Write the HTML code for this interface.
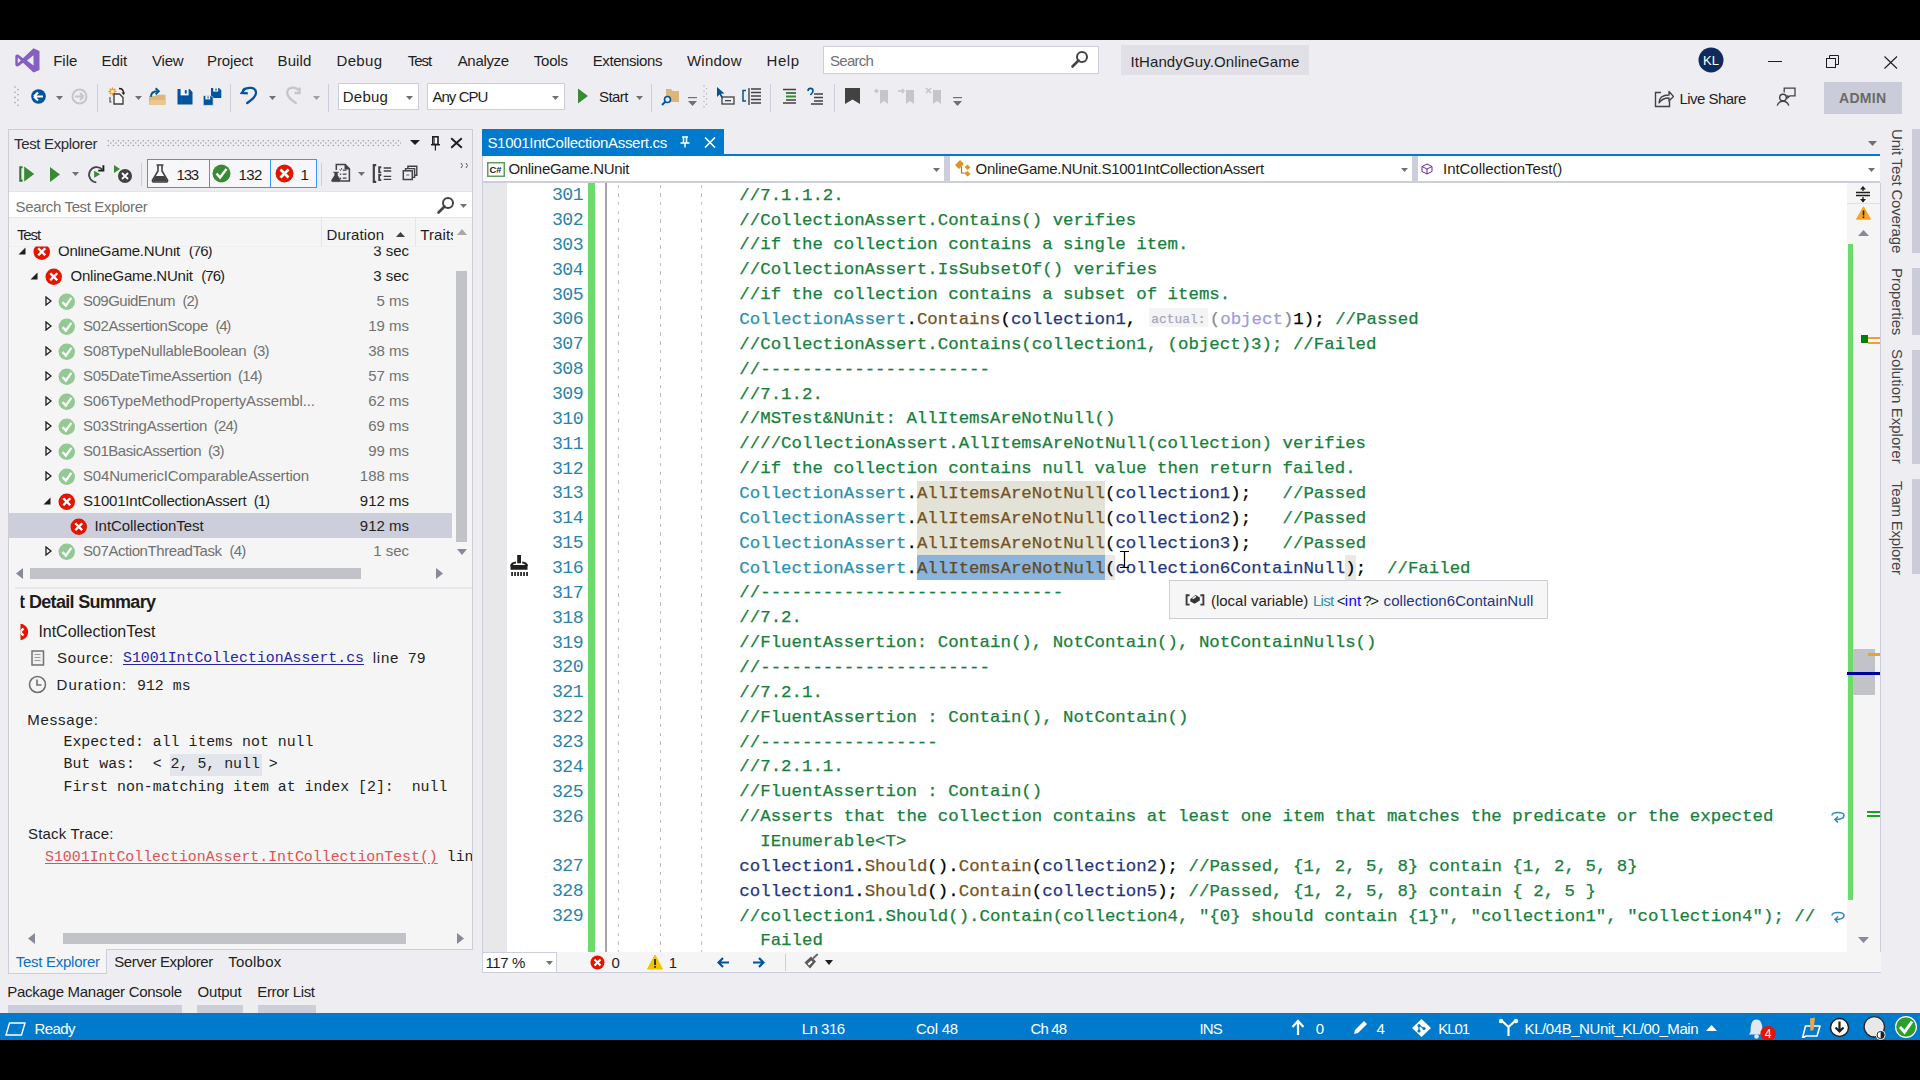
<!DOCTYPE html><html><head><meta charset="utf-8"><title>VS</title><style>
html,body{margin:0;padding:0;width:1920px;height:1080px;overflow:hidden;background:#000;}
.r{position:absolute;display:block;}
.t{position:absolute;line-height:1;white-space:nowrap;}
.cd{-webkit-text-stroke:0.25px currentColor;}
.cd span{-webkit-text-stroke:0.25px currentColor;}
</style></head><body><div class="r" style="left:0px;top:40px;width:1920px;height:973px;background:#EEEEF2;"></div>
<div class="r" style="left:0px;top:1013px;width:1920px;height:27px;background:#007ACC;"></div>
<svg class="r" style="left:15px;top:47.5px" width="25" height="25" viewBox="0 0 25 25"><path d="M18.5 0.3 L24.5 2.9 V22 L18.5 24.4 L8 14.7 L3.8 18 C2 19 0.3 18.3 0.3 16.3 V8.7 C0.3 6.7 2 6 3.8 7 L8 10.2 Z M18.5 7.2 L12 12.45 L18.5 17.6 Z M2.8 9.6 V15.3 L5.8 12.45 Z" fill="#865FC5" fill-rule="evenodd"/></svg>
<div class="t" style="left:53.20px;top:53.30px;font-family:'Liberation Sans', sans-serif;font-size:15px;color:#1E1E1E;letter-spacing:-0.009px;">File</div>
<div class="t" style="left:101.50px;top:53.30px;font-family:'Liberation Sans', sans-serif;font-size:15px;color:#1E1E1E;letter-spacing:-0.06px;">Edit</div>
<div class="t" style="left:152.00px;top:53.30px;font-family:'Liberation Sans', sans-serif;font-size:15px;color:#1E1E1E;letter-spacing:-0.22px;">View</div>
<div class="t" style="left:207.00px;top:53.30px;font-family:'Liberation Sans', sans-serif;font-size:15px;color:#1E1E1E;letter-spacing:-0.086px;">Project</div>
<div class="t" style="left:277.50px;top:53.30px;font-family:'Liberation Sans', sans-serif;font-size:15px;color:#1E1E1E;letter-spacing:0.122px;">Build</div>
<div class="t" style="left:336.50px;top:53.30px;font-family:'Liberation Sans', sans-serif;font-size:15px;color:#1E1E1E;letter-spacing:0.335px;">Debug</div>
<div class="t" style="left:407.70px;top:53.30px;font-family:'Liberation Sans', sans-serif;font-size:15px;color:#1E1E1E;letter-spacing:-1.014px;">Test</div>
<div class="t" style="left:457.70px;top:53.30px;font-family:'Liberation Sans', sans-serif;font-size:15px;color:#1E1E1E;letter-spacing:-0.329px;">Analyze</div>
<div class="t" style="left:533.75px;top:53.30px;font-family:'Liberation Sans', sans-serif;font-size:15px;color:#1E1E1E;letter-spacing:-0.192px;">Tools</div>
<div class="t" style="left:592.75px;top:53.30px;font-family:'Liberation Sans', sans-serif;font-size:15px;color:#1E1E1E;letter-spacing:-0.414px;">Extensions</div>
<div class="t" style="left:686.90px;top:53.30px;font-family:'Liberation Sans', sans-serif;font-size:15px;color:#1E1E1E;letter-spacing:0.257px;">Window</div>
<div class="t" style="left:766.50px;top:53.30px;font-family:'Liberation Sans', sans-serif;font-size:15px;color:#1E1E1E;letter-spacing:0.581px;">Help</div>
<div class="r" style="left:823px;top:46px;width:276px;height:28px;background:#FFFFFF;box-sizing:border-box;border:1px solid #CCCEDB;"></div>
<div class="t" style="left:830.00px;top:53.30px;font-family:'Liberation Sans', sans-serif;font-size:15px;color:#717171;letter-spacing:-0.717px;">Search</div>
<svg class="r" style="left:1070px;top:50px" width="20" height="20" viewBox="0 0 20 20"><circle cx="12" cy="7" r="5" fill="none" stroke="#424242" stroke-width="2"/><line x1="8.5" y1="10.5" x2="2.5" y2="16.5" stroke="#424242" stroke-width="2.6" stroke-linecap="round"/></svg>
<div class="r" style="left:1121px;top:45px;width:188px;height:30px;background:#E0E0E6;"></div>
<div class="t" style="left:1130.40px;top:54.30px;font-family:'Liberation Sans', sans-serif;font-size:15px;color:#1E1E1E;letter-spacing:0.119px;">ItHandyGuy.OnlineGame</div>
<svg class="r" style="left:1698px;top:47px" width="26" height="26" viewBox="0 0 26 26"><circle cx="13" cy="13" r="12.5" fill="#0E2B5E"/><text x="13" y="17.5" font-family="Liberation Sans" font-size="13" fill="#FFFFFF" text-anchor="middle">KL</text></svg>
<div class="r" style="left:1768px;top:61px;width:14px;height:1px;background:#1E1E1E;"></div>
<svg class="r" style="left:1826px;top:55px" width="14" height="14" viewBox="0 0 14 14"><rect x="0.5" y="3.5" width="9" height="9" fill="none" stroke="#1E1E1E"/><path d="M3.5 3.5 V0.5 H12.5 V9.5 H9.5" fill="none" stroke="#1E1E1E"/></svg>
<svg class="r" style="left:1884px;top:56px" width="14" height="13" viewBox="0 0 14 13"><path d="M0.5 0.5 L13 12.5 M13 0.5 L0.5 12.5" stroke="#1E1E1E" stroke-width="1.1"/></svg>
<svg class="r" style="left:14px;top:86px" width="6" height="22" viewBox="0 0 6 22"><circle cx="1" cy="1.0" r="0.8" fill="#A0A0A0"/><circle cx="4" cy="3.6" r="0.8" fill="#A0A0A0"/><circle cx="1" cy="6.2" r="0.8" fill="#A0A0A0"/><circle cx="4" cy="8.8" r="0.8" fill="#A0A0A0"/><circle cx="1" cy="11.4" r="0.8" fill="#A0A0A0"/><circle cx="4" cy="14.0" r="0.8" fill="#A0A0A0"/><circle cx="1" cy="16.6" r="0.8" fill="#A0A0A0"/><circle cx="4" cy="19.2" r="0.8" fill="#A0A0A0"/></svg>
<svg class="r" style="left:30px;top:88px" width="17" height="17" viewBox="0 0 17 17"><circle cx="8.5" cy="8.5" r="7.3" fill="#00539C"/><path d="M4 8.5 L8 4.5 M4 8.5 L8 12.5 M4.3 8.5 H13" stroke="#FFFFFF" stroke-width="2.2" fill="none"/></svg>
<svg class="r" style="left:56px;top:96px" width="7" height="4" viewBox="0 0 7 4"><polygon points="0,0 7,0 3.5,4" fill="#717171"/></svg>
<svg class="r" style="left:71px;top:88px" width="17" height="17" viewBox="0 0 17 17"><circle cx="8.5" cy="8.5" r="7" fill="none" stroke="#C6C6C6" stroke-width="2"/><path d="M12.5 8.5 L9 5 M12.5 8.5 L9 12 M4 8.5 H12" stroke="#C6C6C6" stroke-width="2" fill="none"/></svg>
<div class="r" style="left:97px;top:84px;width:1px;height:28px;background:#CCCEDB;"></div>
<svg class="r" style="left:107px;top:86px" width="19" height="20" viewBox="0 0 19 20"><path d="M5.5 1.5 V9.5 M1.5 5.5 H9.5 M2.7 2.7 L8.3 8.3 M8.3 2.7 L2.7 8.3" stroke="#E8932B" stroke-width="1.3"/><circle cx="5.5" cy="5.5" r="1.6" fill="#FFF3D6"/><path d="M7 8 H12.5 L16 11.5 V18 H7 Z" fill="#F6F6F6" stroke="#424242" stroke-width="1.4"/><path d="M12 2.5 C14.5 2.5 16.5 4 16.5 7" stroke="#1E1E1E" stroke-width="1.3" fill="none"/><polygon points="14.5,6.5 18.3,6.5 16.5,9" fill="#1E1E1E"/><path d="M3 11 V16 H4.5" stroke="#424242" stroke-width="1.1" fill="none"/></svg>
<svg class="r" style="left:135px;top:96px" width="7" height="4" viewBox="0 0 7 4"><polygon points="0,0 7,0 3.5,4" fill="#717171"/></svg>
<svg class="r" style="left:148px;top:87px" width="19" height="19" viewBox="0 0 19 19"><path d="M1 9 H7 L8.5 7.8 H17.5 V17.8 H1 Z" fill="#DCB67A"/><path d="M2.2 13 H17.5 V17.8 H1 Z" fill="#E9C88D"/><path d="M3 9.8 C3 6 5.5 4.3 9.5 4.3" stroke="#00539C" stroke-width="1.9" fill="none"/><path d="M7.6 1.2 L10.8 4.3 L7.6 7.4" stroke="#00539C" stroke-width="1.9" fill="none"/></svg>
<svg class="r" style="left:177px;top:89px" width="16" height="16" viewBox="0 0 16 16"><path d="M0.5 0 H12.5 L15.5 3 V15.5 H0.5 Z" fill="#00539C"/><rect x="3.6" y="0" width="8" height="6.4" fill="#F4F4F6"/><rect x="7.8" y="1.1" width="1.9" height="3.4" fill="#00539C"/><path d="M4.3 9 V15" stroke="#0A67B5" stroke-width="0.6"/></svg>
<svg class="r" style="left:202px;top:87px" width="20" height="20" viewBox="0 0 20 20"><path d="M9 1 H17 L19.3 3.3 V11 H9 Z" fill="#00539C"/><rect x="11.2" y="1" width="5" height="3.6" fill="#F4F4F6"/><rect x="13.4" y="1.5" width="1.2" height="2.2" fill="#00539C"/><path d="M1.2 8.5 H9 L11.2 10.7 V18.4 H1.2 Z" fill="#00539C" stroke="#EEEEF2" stroke-width="0.8"/><rect x="3.4" y="9" width="4.8" height="3.4" fill="#F4F4F6"/><rect x="5.5" y="9.4" width="1.1" height="2" fill="#00539C"/></svg>
<div class="r" style="left:230px;top:84px;width:1px;height:28px;background:#CCCEDB;"></div>
<svg class="r" style="left:240px;top:86px" width="18" height="19" viewBox="0 0 18 19"><path d="M3.5 3.8 C8 0.6 16 1 16 7 C16 11 11.5 14 7.2 17" stroke="#00539C" stroke-width="2.3" fill="none" stroke-linecap="round"/><path d="M5.2 2.2 L1.8 7 L7.8 7.4" stroke="#00539C" stroke-width="2.3" fill="none" stroke-linejoin="miter"/></svg>
<svg class="r" style="left:269px;top:96px" width="7" height="4" viewBox="0 0 7 4"><polygon points="0,0 7,0 3.5,4" fill="#717171"/></svg>
<svg class="r" style="left:285px;top:86px" width="18" height="19" viewBox="0 0 18 19"><path d="M13.2 3.5 C9 0.6 2.2 1 2.2 7 C2.2 11 6.5 14 10.8 17" stroke="#C6C6C6" stroke-width="2.3" fill="none" stroke-linecap="round"/><path d="M14.6 1.5 V7 H9.5" stroke="#C6C6C6" stroke-width="2.3" fill="none"/></svg>
<svg class="r" style="left:313px;top:96px" width="7" height="4" viewBox="0 0 7 4"><polygon points="0,0 7,0 3.5,4" fill="#A0A0A0"/></svg>
<div class="r" style="left:328px;top:84px;width:1px;height:28px;background:#CCCEDB;"></div>
<div class="r" style="left:338px;top:83px;width:81px;height:27px;background:#FFFFFF;box-sizing:border-box;border:1px solid #CCCEDB;"></div>
<div class="t" style="left:342.80px;top:89.30px;font-family:'Liberation Sans', sans-serif;font-size:15px;color:#1E1E1E;letter-spacing:0.21px;">Debug</div>
<svg class="r" style="left:406px;top:96px" width="7" height="4" viewBox="0 0 7 4"><polygon points="0,0 7,0 3.5,4" fill="#717171"/></svg>
<div class="r" style="left:427px;top:83px;width:138px;height:27px;background:#FFFFFF;box-sizing:border-box;border:1px solid #CCCEDB;"></div>
<div class="t" style="left:432.40px;top:89.30px;font-family:'Liberation Sans', sans-serif;font-size:15px;color:#1E1E1E;letter-spacing:-0.942px;">Any CPU</div>
<svg class="r" style="left:552px;top:96px" width="7" height="4" viewBox="0 0 7 4"><polygon points="0,0 7,0 3.5,4" fill="#717171"/></svg>
<svg class="r" style="left:577px;top:88px" width="12" height="16" viewBox="0 0 12 16"><polygon points="1,0.5 11,8 1,15.5" fill="#388A34"/></svg>
<div class="t" style="left:599.00px;top:89.30px;font-family:'Liberation Sans', sans-serif;font-size:15px;color:#1E1E1E;letter-spacing:-0.552px;">Start</div>
<svg class="r" style="left:636px;top:96px" width="7" height="4" viewBox="0 0 7 4"><polygon points="0,0 7,0 3.5,4" fill="#717171"/></svg>
<div class="r" style="left:651px;top:84px;width:1px;height:28px;background:#CCCEDB;"></div>
<svg class="r" style="left:661px;top:87px" width="20" height="19" viewBox="0 0 20 19"><path d="M5 2 H10 L11.5 4 H18 V15 H5 Z" fill="#DCB67A"/><circle cx="6.5" cy="12.5" r="3" fill="#EEEEF2" stroke="#00539C" stroke-width="1.6"/><line x1="4.3" y1="14.8" x2="1" y2="18" stroke="#00539C" stroke-width="2"/></svg>
<svg class="r" style="left:688px;top:97px" width="9" height="10" viewBox="0 0 9 10"><rect x="0" y="0" width="9" height="1.2" fill="#717171"/><polygon points="0,4 9,4 4.5,9" fill="#717171"/></svg>
<svg class="r" style="left:703px;top:85px" width="5" height="24" viewBox="0 0 5 24"><circle cx="1.0" cy="1.0" r="0.7" fill="#B0B0B0"/><circle cx="3.5" cy="3.6" r="0.7" fill="#B0B0B0"/><circle cx="1.0" cy="6.2" r="0.7" fill="#B0B0B0"/><circle cx="3.5" cy="8.8" r="0.7" fill="#B0B0B0"/><circle cx="1.0" cy="11.4" r="0.7" fill="#B0B0B0"/><circle cx="3.5" cy="14.0" r="0.7" fill="#B0B0B0"/><circle cx="1.0" cy="16.6" r="0.7" fill="#B0B0B0"/><circle cx="3.5" cy="19.2" r="0.7" fill="#B0B0B0"/><circle cx="1.0" cy="21.8" r="0.7" fill="#B0B0B0"/></svg>
<svg class="r" style="left:716px;top:87px" width="19" height="19" viewBox="0 0 19 19"><polygon points="1,0 1,10 3.5,7.5 5.5,11 7,10 5,6.8 8.5,6.5" fill="#00539C"/><rect x="6" y="10" width="12" height="7" fill="none" stroke="#424242" stroke-width="1.3"/><rect x="9" y="13" width="6" height="1.3" fill="#424242"/></svg>
<svg class="r" style="left:742px;top:87px" width="20" height="18" viewBox="0 0 20 18"><path d="M4 3.5 H1 V14 H4" stroke="#00539C" stroke-width="1.5" fill="none"/><path d="M7 1 V18" stroke="#424242" stroke-width="1.4"/><path d="M9 2 H19 M9 5.5 H19 M9 9 H19 M9 12.5 H19 M9 16 H19" stroke="#424242" stroke-width="1.3"/></svg>
<div class="r" style="left:770px;top:84px;width:1px;height:28px;background:#CCCEDB;"></div>
<svg class="r" style="left:782px;top:88px" width="15" height="16" viewBox="0 0 15 16"><path d="M1 1.5 H14 M4 5 H14 M4 8.5 H14 M4 12 H14 M1 15 H14" stroke="#424242" stroke-width="1.4"/><path d="M4 5 H14 M4 8.5 H14" stroke="#388A34" stroke-width="1.4"/></svg>
<svg class="r" style="left:806px;top:87px" width="18" height="18" viewBox="0 0 18 18"><path d="M2 4 C2 0.5 7 0.5 7 4 C7 6 5 6.5 4.5 8" stroke="#00539C" stroke-width="1.6" fill="none"/><path d="M8 7 H17 M8 10.5 H17 M8 14 H17 M5 17 H17" stroke="#424242" stroke-width="1.4"/></svg>
<div class="r" style="left:834px;top:84px;width:1px;height:28px;background:#CCCEDB;"></div>
<svg class="r" style="left:845px;top:88px" width="15" height="16" viewBox="0 0 15 16"><polygon points="0,0 15,0 15,16 7.5,11.5 0,16" fill="#424242"/></svg>
<svg class="r" style="left:873px;top:87px" width="16" height="18" viewBox="0 0 16 18"><path d="M7 3 H15 V17 L11 14 L7 17 Z" fill="#C6C6C6"/><path d="M6 4 L2 4 M4 2 L2 4 L4 6" stroke="#C6C6C6" stroke-width="1.5" fill="none"/></svg>
<svg class="r" style="left:898px;top:87px" width="17" height="18" viewBox="0 0 17 18"><path d="M8 3 H16 V17 L12 14 L8 17 Z" fill="#C6C6C6"/><path d="M0 4 H6 M4 2 L6 4 L4 6" stroke="#C6C6C6" stroke-width="1.5" fill="none"/></svg>
<svg class="r" style="left:925px;top:87px" width="17" height="18" viewBox="0 0 17 18"><path d="M8 3 H16 V17 L12 14 L8 17 Z" fill="#C6C6C6"/><path d="M1 1 L6 6 M6 1 L1 6" stroke="#C6C6C6" stroke-width="1.5"/></svg>
<svg class="r" style="left:953px;top:97px" width="9" height="10" viewBox="0 0 9 10"><rect x="0" y="0" width="9" height="1.2" fill="#717171"/><polygon points="0,4 9,4 4.5,9" fill="#717171"/></svg>
<svg class="r" style="left:1654px;top:88px" width="20" height="20" viewBox="0 0 20 20"><path d="M7 4.5 H1.5 V18.5 H15.5 V13" stroke="#424242" stroke-width="1.4" fill="none"/><path d="M5 15 C5 9 9 7 15 7 V3.5 L19.5 8.5 L15 13 V10 C10.5 10 7.5 11 5 15 Z" stroke="#424242" stroke-width="1.3" fill="none" stroke-linejoin="round"/></svg>
<div class="t" style="left:1679.50px;top:91.30px;font-family:'Liberation Sans', sans-serif;font-size:15px;color:#1E1E1E;letter-spacing:-0.541px;">Live Share</div>
<svg class="r" style="left:1776px;top:87px" width="20" height="20" viewBox="0 0 20 20"><path d="M8.2 5.5 V1.2 H19 V8.8 H14 L11.8 10.8 V8.8 H10.5" stroke="#424242" stroke-width="1.3" fill="none"/><circle cx="7" cy="10.5" r="3.3" fill="none" stroke="#424242" stroke-width="1.4"/><path d="M1.2 18.6 C2.2 15.5 4.5 14.3 7 14.3 C9.5 14.3 11.8 15.5 12.8 18.6" stroke="#424242" stroke-width="1.4" fill="none"/></svg>
<div class="r" style="left:1824px;top:82px;width:78px;height:32px;background:#CACDD9;"></div>
<div class="t" style="left:1839.00px;top:90.75px;font-family:'Liberation Sans', sans-serif;font-size:14px;color:#6A6A6A;font-weight:700;letter-spacing:0.307px;">ADMIN</div>
<div class="r" style="left:8px;top:129px;width:465px;height:821px;background:#F5F5F5;box-sizing:border-box;border:1px solid #CDCDD3;"></div>
<div class="r" style="left:9px;top:130px;width:463px;height:61px;background:#EEEEF2;"></div>
<div class="t" style="left:14.00px;top:135.70px;font-family:'Liberation Sans', sans-serif;font-size:15px;color:#2D2D2D;letter-spacing:-0.336px;">Test Explorer</div>
<svg class="r" style="left:107px;top:139px" width="294" height="8" viewBox="0 0 294 8"><circle cx="1.3" cy="1.7" r="0.75" fill="#9A9A9A"/><circle cx="3.8" cy="4" r="0.75" fill="#9A9A9A"/><circle cx="1.3" cy="6.4" r="0.75" fill="#9A9A9A"/><circle cx="6.3" cy="1.7" r="0.75" fill="#9A9A9A"/><circle cx="8.8" cy="4" r="0.75" fill="#9A9A9A"/><circle cx="6.3" cy="6.4" r="0.75" fill="#9A9A9A"/><circle cx="11.3" cy="1.7" r="0.75" fill="#9A9A9A"/><circle cx="13.8" cy="4" r="0.75" fill="#9A9A9A"/><circle cx="11.3" cy="6.4" r="0.75" fill="#9A9A9A"/><circle cx="16.3" cy="1.7" r="0.75" fill="#9A9A9A"/><circle cx="18.8" cy="4" r="0.75" fill="#9A9A9A"/><circle cx="16.3" cy="6.4" r="0.75" fill="#9A9A9A"/><circle cx="21.3" cy="1.7" r="0.75" fill="#9A9A9A"/><circle cx="23.8" cy="4" r="0.75" fill="#9A9A9A"/><circle cx="21.3" cy="6.4" r="0.75" fill="#9A9A9A"/><circle cx="26.3" cy="1.7" r="0.75" fill="#9A9A9A"/><circle cx="28.8" cy="4" r="0.75" fill="#9A9A9A"/><circle cx="26.3" cy="6.4" r="0.75" fill="#9A9A9A"/><circle cx="31.3" cy="1.7" r="0.75" fill="#9A9A9A"/><circle cx="33.8" cy="4" r="0.75" fill="#9A9A9A"/><circle cx="31.3" cy="6.4" r="0.75" fill="#9A9A9A"/><circle cx="36.3" cy="1.7" r="0.75" fill="#9A9A9A"/><circle cx="38.8" cy="4" r="0.75" fill="#9A9A9A"/><circle cx="36.3" cy="6.4" r="0.75" fill="#9A9A9A"/><circle cx="41.3" cy="1.7" r="0.75" fill="#9A9A9A"/><circle cx="43.8" cy="4" r="0.75" fill="#9A9A9A"/><circle cx="41.3" cy="6.4" r="0.75" fill="#9A9A9A"/><circle cx="46.3" cy="1.7" r="0.75" fill="#9A9A9A"/><circle cx="48.8" cy="4" r="0.75" fill="#9A9A9A"/><circle cx="46.3" cy="6.4" r="0.75" fill="#9A9A9A"/><circle cx="51.3" cy="1.7" r="0.75" fill="#9A9A9A"/><circle cx="53.8" cy="4" r="0.75" fill="#9A9A9A"/><circle cx="51.3" cy="6.4" r="0.75" fill="#9A9A9A"/><circle cx="56.3" cy="1.7" r="0.75" fill="#9A9A9A"/><circle cx="58.8" cy="4" r="0.75" fill="#9A9A9A"/><circle cx="56.3" cy="6.4" r="0.75" fill="#9A9A9A"/><circle cx="61.3" cy="1.7" r="0.75" fill="#9A9A9A"/><circle cx="63.8" cy="4" r="0.75" fill="#9A9A9A"/><circle cx="61.3" cy="6.4" r="0.75" fill="#9A9A9A"/><circle cx="66.3" cy="1.7" r="0.75" fill="#9A9A9A"/><circle cx="68.8" cy="4" r="0.75" fill="#9A9A9A"/><circle cx="66.3" cy="6.4" r="0.75" fill="#9A9A9A"/><circle cx="71.3" cy="1.7" r="0.75" fill="#9A9A9A"/><circle cx="73.8" cy="4" r="0.75" fill="#9A9A9A"/><circle cx="71.3" cy="6.4" r="0.75" fill="#9A9A9A"/><circle cx="76.3" cy="1.7" r="0.75" fill="#9A9A9A"/><circle cx="78.8" cy="4" r="0.75" fill="#9A9A9A"/><circle cx="76.3" cy="6.4" r="0.75" fill="#9A9A9A"/><circle cx="81.3" cy="1.7" r="0.75" fill="#9A9A9A"/><circle cx="83.8" cy="4" r="0.75" fill="#9A9A9A"/><circle cx="81.3" cy="6.4" r="0.75" fill="#9A9A9A"/><circle cx="86.3" cy="1.7" r="0.75" fill="#9A9A9A"/><circle cx="88.8" cy="4" r="0.75" fill="#9A9A9A"/><circle cx="86.3" cy="6.4" r="0.75" fill="#9A9A9A"/><circle cx="91.3" cy="1.7" r="0.75" fill="#9A9A9A"/><circle cx="93.8" cy="4" r="0.75" fill="#9A9A9A"/><circle cx="91.3" cy="6.4" r="0.75" fill="#9A9A9A"/><circle cx="96.3" cy="1.7" r="0.75" fill="#9A9A9A"/><circle cx="98.8" cy="4" r="0.75" fill="#9A9A9A"/><circle cx="96.3" cy="6.4" r="0.75" fill="#9A9A9A"/><circle cx="101.3" cy="1.7" r="0.75" fill="#9A9A9A"/><circle cx="103.8" cy="4" r="0.75" fill="#9A9A9A"/><circle cx="101.3" cy="6.4" r="0.75" fill="#9A9A9A"/><circle cx="106.3" cy="1.7" r="0.75" fill="#9A9A9A"/><circle cx="108.8" cy="4" r="0.75" fill="#9A9A9A"/><circle cx="106.3" cy="6.4" r="0.75" fill="#9A9A9A"/><circle cx="111.3" cy="1.7" r="0.75" fill="#9A9A9A"/><circle cx="113.8" cy="4" r="0.75" fill="#9A9A9A"/><circle cx="111.3" cy="6.4" r="0.75" fill="#9A9A9A"/><circle cx="116.3" cy="1.7" r="0.75" fill="#9A9A9A"/><circle cx="118.8" cy="4" r="0.75" fill="#9A9A9A"/><circle cx="116.3" cy="6.4" r="0.75" fill="#9A9A9A"/><circle cx="121.3" cy="1.7" r="0.75" fill="#9A9A9A"/><circle cx="123.8" cy="4" r="0.75" fill="#9A9A9A"/><circle cx="121.3" cy="6.4" r="0.75" fill="#9A9A9A"/><circle cx="126.3" cy="1.7" r="0.75" fill="#9A9A9A"/><circle cx="128.8" cy="4" r="0.75" fill="#9A9A9A"/><circle cx="126.3" cy="6.4" r="0.75" fill="#9A9A9A"/><circle cx="131.3" cy="1.7" r="0.75" fill="#9A9A9A"/><circle cx="133.8" cy="4" r="0.75" fill="#9A9A9A"/><circle cx="131.3" cy="6.4" r="0.75" fill="#9A9A9A"/><circle cx="136.3" cy="1.7" r="0.75" fill="#9A9A9A"/><circle cx="138.8" cy="4" r="0.75" fill="#9A9A9A"/><circle cx="136.3" cy="6.4" r="0.75" fill="#9A9A9A"/><circle cx="141.3" cy="1.7" r="0.75" fill="#9A9A9A"/><circle cx="143.8" cy="4" r="0.75" fill="#9A9A9A"/><circle cx="141.3" cy="6.4" r="0.75" fill="#9A9A9A"/><circle cx="146.3" cy="1.7" r="0.75" fill="#9A9A9A"/><circle cx="148.8" cy="4" r="0.75" fill="#9A9A9A"/><circle cx="146.3" cy="6.4" r="0.75" fill="#9A9A9A"/><circle cx="151.3" cy="1.7" r="0.75" fill="#9A9A9A"/><circle cx="153.8" cy="4" r="0.75" fill="#9A9A9A"/><circle cx="151.3" cy="6.4" r="0.75" fill="#9A9A9A"/><circle cx="156.3" cy="1.7" r="0.75" fill="#9A9A9A"/><circle cx="158.8" cy="4" r="0.75" fill="#9A9A9A"/><circle cx="156.3" cy="6.4" r="0.75" fill="#9A9A9A"/><circle cx="161.3" cy="1.7" r="0.75" fill="#9A9A9A"/><circle cx="163.8" cy="4" r="0.75" fill="#9A9A9A"/><circle cx="161.3" cy="6.4" r="0.75" fill="#9A9A9A"/><circle cx="166.3" cy="1.7" r="0.75" fill="#9A9A9A"/><circle cx="168.8" cy="4" r="0.75" fill="#9A9A9A"/><circle cx="166.3" cy="6.4" r="0.75" fill="#9A9A9A"/><circle cx="171.3" cy="1.7" r="0.75" fill="#9A9A9A"/><circle cx="173.8" cy="4" r="0.75" fill="#9A9A9A"/><circle cx="171.3" cy="6.4" r="0.75" fill="#9A9A9A"/><circle cx="176.3" cy="1.7" r="0.75" fill="#9A9A9A"/><circle cx="178.8" cy="4" r="0.75" fill="#9A9A9A"/><circle cx="176.3" cy="6.4" r="0.75" fill="#9A9A9A"/><circle cx="181.3" cy="1.7" r="0.75" fill="#9A9A9A"/><circle cx="183.8" cy="4" r="0.75" fill="#9A9A9A"/><circle cx="181.3" cy="6.4" r="0.75" fill="#9A9A9A"/><circle cx="186.3" cy="1.7" r="0.75" fill="#9A9A9A"/><circle cx="188.8" cy="4" r="0.75" fill="#9A9A9A"/><circle cx="186.3" cy="6.4" r="0.75" fill="#9A9A9A"/><circle cx="191.3" cy="1.7" r="0.75" fill="#9A9A9A"/><circle cx="193.8" cy="4" r="0.75" fill="#9A9A9A"/><circle cx="191.3" cy="6.4" r="0.75" fill="#9A9A9A"/><circle cx="196.3" cy="1.7" r="0.75" fill="#9A9A9A"/><circle cx="198.8" cy="4" r="0.75" fill="#9A9A9A"/><circle cx="196.3" cy="6.4" r="0.75" fill="#9A9A9A"/><circle cx="201.3" cy="1.7" r="0.75" fill="#9A9A9A"/><circle cx="203.8" cy="4" r="0.75" fill="#9A9A9A"/><circle cx="201.3" cy="6.4" r="0.75" fill="#9A9A9A"/><circle cx="206.3" cy="1.7" r="0.75" fill="#9A9A9A"/><circle cx="208.8" cy="4" r="0.75" fill="#9A9A9A"/><circle cx="206.3" cy="6.4" r="0.75" fill="#9A9A9A"/><circle cx="211.3" cy="1.7" r="0.75" fill="#9A9A9A"/><circle cx="213.8" cy="4" r="0.75" fill="#9A9A9A"/><circle cx="211.3" cy="6.4" r="0.75" fill="#9A9A9A"/><circle cx="216.3" cy="1.7" r="0.75" fill="#9A9A9A"/><circle cx="218.8" cy="4" r="0.75" fill="#9A9A9A"/><circle cx="216.3" cy="6.4" r="0.75" fill="#9A9A9A"/><circle cx="221.3" cy="1.7" r="0.75" fill="#9A9A9A"/><circle cx="223.8" cy="4" r="0.75" fill="#9A9A9A"/><circle cx="221.3" cy="6.4" r="0.75" fill="#9A9A9A"/><circle cx="226.3" cy="1.7" r="0.75" fill="#9A9A9A"/><circle cx="228.8" cy="4" r="0.75" fill="#9A9A9A"/><circle cx="226.3" cy="6.4" r="0.75" fill="#9A9A9A"/><circle cx="231.3" cy="1.7" r="0.75" fill="#9A9A9A"/><circle cx="233.8" cy="4" r="0.75" fill="#9A9A9A"/><circle cx="231.3" cy="6.4" r="0.75" fill="#9A9A9A"/><circle cx="236.3" cy="1.7" r="0.75" fill="#9A9A9A"/><circle cx="238.8" cy="4" r="0.75" fill="#9A9A9A"/><circle cx="236.3" cy="6.4" r="0.75" fill="#9A9A9A"/><circle cx="241.3" cy="1.7" r="0.75" fill="#9A9A9A"/><circle cx="243.8" cy="4" r="0.75" fill="#9A9A9A"/><circle cx="241.3" cy="6.4" r="0.75" fill="#9A9A9A"/><circle cx="246.3" cy="1.7" r="0.75" fill="#9A9A9A"/><circle cx="248.8" cy="4" r="0.75" fill="#9A9A9A"/><circle cx="246.3" cy="6.4" r="0.75" fill="#9A9A9A"/><circle cx="251.3" cy="1.7" r="0.75" fill="#9A9A9A"/><circle cx="253.8" cy="4" r="0.75" fill="#9A9A9A"/><circle cx="251.3" cy="6.4" r="0.75" fill="#9A9A9A"/><circle cx="256.3" cy="1.7" r="0.75" fill="#9A9A9A"/><circle cx="258.8" cy="4" r="0.75" fill="#9A9A9A"/><circle cx="256.3" cy="6.4" r="0.75" fill="#9A9A9A"/><circle cx="261.3" cy="1.7" r="0.75" fill="#9A9A9A"/><circle cx="263.8" cy="4" r="0.75" fill="#9A9A9A"/><circle cx="261.3" cy="6.4" r="0.75" fill="#9A9A9A"/><circle cx="266.3" cy="1.7" r="0.75" fill="#9A9A9A"/><circle cx="268.8" cy="4" r="0.75" fill="#9A9A9A"/><circle cx="266.3" cy="6.4" r="0.75" fill="#9A9A9A"/><circle cx="271.3" cy="1.7" r="0.75" fill="#9A9A9A"/><circle cx="273.8" cy="4" r="0.75" fill="#9A9A9A"/><circle cx="271.3" cy="6.4" r="0.75" fill="#9A9A9A"/><circle cx="276.3" cy="1.7" r="0.75" fill="#9A9A9A"/><circle cx="278.8" cy="4" r="0.75" fill="#9A9A9A"/><circle cx="276.3" cy="6.4" r="0.75" fill="#9A9A9A"/><circle cx="281.3" cy="1.7" r="0.75" fill="#9A9A9A"/><circle cx="283.8" cy="4" r="0.75" fill="#9A9A9A"/><circle cx="281.3" cy="6.4" r="0.75" fill="#9A9A9A"/><circle cx="286.3" cy="1.7" r="0.75" fill="#9A9A9A"/><circle cx="288.8" cy="4" r="0.75" fill="#9A9A9A"/><circle cx="286.3" cy="6.4" r="0.75" fill="#9A9A9A"/><circle cx="291.3" cy="1.7" r="0.75" fill="#9A9A9A"/><circle cx="293.8" cy="4" r="0.75" fill="#9A9A9A"/><circle cx="291.3" cy="6.4" r="0.75" fill="#9A9A9A"/></svg>
<svg class="r" style="left:410px;top:140px" width="10" height="5" viewBox="0 0 10 5"><polygon points="0,0 10,0 5.0,5" fill="#1E1E1E"/></svg>
<svg class="r" style="left:429px;top:135px" width="12" height="16" viewBox="0 0 12 16"><rect x="3.8" y="1.8" width="5.2" height="7.6" fill="#FFFFFF" stroke="#1E1E1E" stroke-width="1.6"/><path d="M5.3 2.6 V9" stroke="#1E1E1E" stroke-width="0.8"/><path d="M2 9.7 H11" stroke="#1E1E1E" stroke-width="1.4"/><path d="M6.4 10 V15.5" stroke="#1E1E1E" stroke-width="1.2"/></svg>
<svg class="r" style="left:450px;top:137px" width="13" height="12" viewBox="0 0 13 12"><path d="M1.2 1.2 L11.8 10.8 M11.8 1.2 L1.2 10.8" stroke="#1E1E1E" stroke-width="1.9"/></svg>
<svg class="r" style="left:18px;top:166px" width="18" height="16" viewBox="0 0 18 16"><path d="M4.6 1.3 H2.3 V14.6 H4.6" stroke="#2F7A2C" stroke-width="2.1" fill="none"/><polygon points="6.2,0.5 16.2,8 6.2,15.5" fill="#388A34"/></svg>
<svg class="r" style="left:49px;top:166px" width="12" height="17" viewBox="0 0 12 17"><polygon points="1,1 11,8.5 1,16" fill="#388A34"/></svg>
<svg class="r" style="left:72px;top:172px" width="7" height="4" viewBox="0 0 7 4"><polygon points="0,0 7,0 3.5,4" fill="#717171"/></svg>
<svg class="r" style="left:86px;top:164px" width="19" height="20" viewBox="0 0 19 20"><path d="M10.3 18.3 A7.6 7.6 0 1 1 16.3 5.6" stroke="#45424A" stroke-width="1.8" fill="none"/><path d="M17.4 1.2 V6.6 H12.2" stroke="#1E1E1E" stroke-width="1.9" fill="none"/><polygon points="8.2,6.8 14.2,10.3 8.2,13.8" fill="#388A34"/></svg>
<svg class="r" style="left:113px;top:165px" width="20" height="19" viewBox="0 0 20 19"><polygon points="1,0 7,4 1,8" fill="#388A34"/><circle cx="12" cy="11" r="7" fill="#424242"/><path d="M9 8 L15 14 M15 8 L9 14" stroke="#FFFFFF" stroke-width="1.8"/></svg>
<div class="r" style="left:141px;top:163px;width:1px;height:23px;background:#CCCEDB;"></div>
<div class="r" style="left:147px;top:159px;width:63px;height:29px;background:#F7F7F9;box-sizing:border-box;border:1px solid #3399FF;"></div>
<div class="r" style="left:209px;top:159px;width:62px;height:29px;background:#F7F7F9;box-sizing:border-box;border:1px solid #3399FF;"></div>
<div class="r" style="left:270px;top:159px;width:47px;height:29px;background:#F7F7F9;box-sizing:border-box;border:1px solid #3399FF;"></div>
<svg class="r" style="left:151px;top:164px" width="18" height="19" viewBox="0 0 18 19"><path d="M5.5 1 H12.5 M7 1 V7 L1.5 16 C1 17.5 2 18 3 18 H15 C16 18 17 17.5 16.5 16 L11 7 V1" fill="none" stroke="#424242" stroke-width="1.6"/><path d="M4.5 12 H13.5 L16 16.5 C16.3 17.2 15.8 17.5 15 17.5 H3 C2.2 17.5 1.7 17.2 2 16.5 Z" fill="#424242"/></svg>
<div class="t" style="left:176.50px;top:167.30px;font-family:'Liberation Sans', sans-serif;font-size:15px;color:#1E1E1E;letter-spacing:-1.217px;">133</div>
<svg class="r" style="left:212px;top:164px" width="19" height="19" viewBox="0 0 19 19"><circle cx="9.5" cy="9.5" r="9" fill="#388A34"/><path d="M4.5 9.5 L8 13.5 L14.5 5" stroke="#FFFFFF" stroke-width="2.4" fill="none"/></svg>
<div class="t" style="left:238.40px;top:167.30px;font-family:'Liberation Sans', sans-serif;font-size:15px;color:#1E1E1E;letter-spacing:-0.542px;">132</div>
<svg class="r" style="left:275px;top:164px" width="19" height="19" viewBox="0 0 19 19"><circle cx="9.5" cy="9.5" r="9" fill="#E51400"/><path d="M5.5 5.5 L13.5 13.5 M13.5 5.5 L5.5 13.5" stroke="#FFFFFF" stroke-width="2.6"/></svg>
<div class="t" style="left:300.40px;top:167.30px;font-family:'Liberation Sans', sans-serif;font-size:15px;color:#1E1E1E;">1</div>
<div class="r" style="left:321px;top:163px;width:1px;height:23px;background:#CCCEDB;"></div>
<svg class="r" style="left:331px;top:163px" width="21" height="20" viewBox="0 0 21 20"><path d="M5.3 7 V1.6 H14.2 L18.4 5.8 V18.1 H9.5" fill="none" stroke="#424242" stroke-width="1.5"/><path d="M14 1.6 V6 H18.4" fill="#424242" stroke="#424242" stroke-width="1"/><path d="M11.8 7.2 H15.5 M11.8 11.2 H15.5 M11.8 15.2 H15.5" stroke="#424242" stroke-width="1.2"/><path d="M8.5 6.5 L9.5 7.5 L11 5" stroke="#424242" stroke-width="0.9" fill="none"/><circle cx="9.5" cy="11.2" r="0.8" fill="#424242"/><circle cx="9.5" cy="15.2" r="0.8" fill="#424242"/><path d="M2 9.3 H8 M3.8 9.3 V12.3 L0.8 17 C0.3 18 0.8 18.6 1.8 18.6 H8.3 C9.3 18.6 9.8 18 9.3 17 L6.3 12.3 V9.3 Z" fill="#424242" stroke="#424242" stroke-width="0.8"/></svg>
<svg class="r" style="left:358px;top:172px" width="7" height="4" viewBox="0 0 7 4"><polygon points="0,0 7,0 3.5,4" fill="#717171"/></svg>
<svg class="r" style="left:372px;top:164px" width="20" height="19" viewBox="0 0 20 19"><path d="M4.2 1.2 H1.8 V17.8 H4.2" stroke="#424242" stroke-width="2.2" fill="none"/><path d="M9.3 3.3 H7.2 V8.4 H9.3 M9.3 11 H7.2 V16.1 H9.3" stroke="#424242" stroke-width="1.9" fill="none"/><path d="M11.7 4 H19.2 M11.7 7 H19.2 M11.7 12.4 H19.2 M11.7 15.4 H19.2" stroke="#424242" stroke-width="1.3"/></svg>
<svg class="r" style="left:402px;top:165px" width="16" height="16" viewBox="0 0 16 16"><rect x="1.3" y="5.8" width="9" height="8.7" fill="#EEEEF2" stroke="#424242" stroke-width="1.5"/><path d="M3.6 5.8 V3.6 H12.6 V12.4 H10.3" stroke="#424242" stroke-width="1.4" fill="none"/><path d="M5.9 3.6 V1.3 H14.8 V10.2 H12.6" stroke="#424242" stroke-width="1.4" fill="none"/><path d="M4.3 10 H7.3" stroke="#717171" stroke-width="1.1"/></svg>
<svg class="r" style="left:460px;top:163px" width="9" height="5" viewBox="0 0 9 5"><path d="M1 0 L2.5 2.5 L1 5 M6 0 L7.5 2.5 L6 5" stroke="#555" stroke-width="1" fill="none"/></svg>
<div class="r" style="left:9px;top:191px;width:463px;height:27px;background:#FFFFFF;border-top:1px solid #E5E5E5;border-bottom:1px solid #E5E5E5;box-sizing:border-box;"></div>
<div class="t" style="left:15.60px;top:198.55px;font-family:'Liberation Sans', sans-serif;font-size:15px;color:#717171;letter-spacing:-0.36px;">Search Test Explorer</div>
<svg class="r" style="left:436px;top:196px" width="19" height="19" viewBox="0 0 19 19"><circle cx="12" cy="7" r="5" fill="none" stroke="#424242" stroke-width="2"/><line x1="8.5" y1="10.5" x2="2.5" y2="16.5" stroke="#424242" stroke-width="2.6" stroke-linecap="round"/></svg>
<svg class="r" style="left:460px;top:204px" width="7" height="4" viewBox="0 0 7 4"><polygon points="0,0 7,0 3.5,4" fill="#717171"/></svg>
<div class="t" style="left:16.90px;top:226.80px;font-family:'Liberation Sans', sans-serif;font-size:15px;color:#1E1E1E;letter-spacing:-1.114px;">Test</div>
<div class="r" style="left:321px;top:218px;width:1px;height:29px;background:#E5E5E5;"></div>
<div class="t" style="left:326.60px;top:226.80px;font-family:'Liberation Sans', sans-serif;font-size:15px;color:#1E1E1E;letter-spacing:0.114px;">Duration</div>
<svg class="r" style="left:396px;top:232px" width="9" height="5" viewBox="0 0 9 5"><polygon points="0,5 9,5 4.5,0" fill="#424242"/></svg>
<div class="r" style="left:415px;top:218px;width:1px;height:29px;background:#E5E5E5;"></div>
<div class="t" style="left:420.20px;top:226.80px;font-family:'Liberation Sans', sans-serif;font-size:15px;color:#1E1E1E;letter-spacing:0.111px;width:32.5px;overflow:hidden;">Traits</div>
<svg class="r" style="left:457px;top:229px" width="10" height="6" viewBox="0 0 10 6"><polygon points="0,6 10,6 5.0,0" fill="#A8A8A8"/></svg>
<div class="r" style="left:9px;top:246px;width:447px;height:1px;background:#EFEFF1;"></div>
<div class="r" style="left:0;top:0;width:1920px;height:1080px;clip-path:inset(246.5px 1468px 517px 9px)">
<div class="r" style="left:9px;top:513px;width:443px;height:25px;background:#CCCEDB;"></div>
<svg class="r" style="left:17.5px;top:246.55px" width="8" height="8" viewBox="0 0 8 8"><polygon points="7.5,0.5 7.5,7.5 0.5,7.5" fill="#1E1E1E"/></svg>
<svg class="r" style="left:32.5px;top:242.55px" width="17.5" height="17.5" viewBox="0 0 17.5 17.5"><circle cx="8.75" cy="8.75" r="8.25" fill="#E51400"/><path d="M5.25 5.25 L12.25 12.25 M12.25 5.25 L5.25 12.25" stroke="#FFFFFF" stroke-width="2.45"/></svg>
<div class="t" style="left:58.00px;top:242.80px;font-family:'Liberation Sans', sans-serif;font-size:15px;color:#1E1E1E;letter-spacing:-0.248px;">OnlineGame.NUnit</div>
<div class="t" style="left:188.75px;top:242.80px;font-family:'Liberation Sans', sans-serif;font-size:15px;color:#1E1E1E;letter-spacing:-0.977px;">(76)</div>
<div class="t" style="left:0.00px;top:242.80px;font-family:'Liberation Sans', sans-serif;font-size:15px;color:#1E1E1E;width:409px;text-align:right;">3 sec</div>
<svg class="r" style="left:30.1px;top:271.55px" width="8" height="8" viewBox="0 0 8 8"><polygon points="7.5,0.5 7.5,7.5 0.5,7.5" fill="#1E1E1E"/></svg>
<svg class="r" style="left:45.1px;top:267.55px" width="17.5" height="17.5" viewBox="0 0 17.5 17.5"><circle cx="8.75" cy="8.75" r="8.25" fill="#E51400"/><path d="M5.25 5.25 L12.25 12.25 M12.25 5.25 L5.25 12.25" stroke="#FFFFFF" stroke-width="2.45"/></svg>
<div class="t" style="left:70.50px;top:267.80px;font-family:'Liberation Sans', sans-serif;font-size:15px;color:#1E1E1E;letter-spacing:-0.231px;">OnlineGame.NUnit</div>
<div class="t" style="left:201.25px;top:267.80px;font-family:'Liberation Sans', sans-serif;font-size:15px;color:#1E1E1E;letter-spacing:-0.977px;">(76)</div>
<div class="t" style="left:0.00px;top:267.80px;font-family:'Liberation Sans', sans-serif;font-size:15px;color:#1E1E1E;width:409px;text-align:right;">3 sec</div>
<svg class="r" style="left:45.2px;top:296.05px" width="7" height="10" viewBox="0 0 7 10"><polygon points="1,1 6,5 1,9" fill="none" stroke="#1E1E1E" stroke-width="1.3"/></svg>
<svg class="r" style="left:57.7px;top:292.55px" width="17.5" height="17.5" viewBox="0 0 17.5 17.5"><circle cx="8.75" cy="8.75" r="8.25" fill="#93C993"/><path d="M4.55 9.1 L7.875 12.6 L13.3 4.9" stroke="#FFFFFF" stroke-width="2.275" fill="none"/></svg>
<div class="t" style="left:83.00px;top:292.80px;font-family:'Liberation Sans', sans-serif;font-size:15px;color:#717171;letter-spacing:-0.506px;">S09GuidEnum</div>
<div class="t" style="left:182.50px;top:292.80px;font-family:'Liberation Sans', sans-serif;font-size:15px;color:#717171;letter-spacing:-1.044px;">(2)</div>
<div class="t" style="left:0.00px;top:292.80px;font-family:'Liberation Sans', sans-serif;font-size:15px;color:#717171;width:409px;text-align:right;">5 ms</div>
<svg class="r" style="left:45.2px;top:321.05px" width="7" height="10" viewBox="0 0 7 10"><polygon points="1,1 6,5 1,9" fill="none" stroke="#1E1E1E" stroke-width="1.3"/></svg>
<svg class="r" style="left:57.7px;top:317.55px" width="17.5" height="17.5" viewBox="0 0 17.5 17.5"><circle cx="8.75" cy="8.75" r="8.25" fill="#93C993"/><path d="M4.55 9.1 L7.875 12.6 L13.3 4.9" stroke="#FFFFFF" stroke-width="2.275" fill="none"/></svg>
<div class="t" style="left:83.00px;top:317.80px;font-family:'Liberation Sans', sans-serif;font-size:15px;color:#717171;letter-spacing:-0.4px;">S02AssertionScope</div>
<div class="t" style="left:215.50px;top:317.80px;font-family:'Liberation Sans', sans-serif;font-size:15px;color:#717171;letter-spacing:-1.294px;">(4)</div>
<div class="t" style="left:0.00px;top:317.80px;font-family:'Liberation Sans', sans-serif;font-size:15px;color:#717171;width:409px;text-align:right;">19 ms</div>
<svg class="r" style="left:45.2px;top:346.05px" width="7" height="10" viewBox="0 0 7 10"><polygon points="1,1 6,5 1,9" fill="none" stroke="#1E1E1E" stroke-width="1.3"/></svg>
<svg class="r" style="left:57.7px;top:342.55px" width="17.5" height="17.5" viewBox="0 0 17.5 17.5"><circle cx="8.75" cy="8.75" r="8.25" fill="#93C993"/><path d="M4.55 9.1 L7.875 12.6 L13.3 4.9" stroke="#FFFFFF" stroke-width="2.275" fill="none"/></svg>
<div class="t" style="left:83.00px;top:342.80px;font-family:'Liberation Sans', sans-serif;font-size:15px;color:#717171;letter-spacing:-0.232px;">S08TypeNullableBoolean</div>
<div class="t" style="left:253.00px;top:342.80px;font-family:'Liberation Sans', sans-serif;font-size:15px;color:#717171;letter-spacing:-0.919px;">(3)</div>
<div class="t" style="left:0.00px;top:342.80px;font-family:'Liberation Sans', sans-serif;font-size:15px;color:#717171;width:409px;text-align:right;">38 ms</div>
<svg class="r" style="left:45.2px;top:371.05px" width="7" height="10" viewBox="0 0 7 10"><polygon points="1,1 6,5 1,9" fill="none" stroke="#1E1E1E" stroke-width="1.3"/></svg>
<svg class="r" style="left:57.7px;top:367.55px" width="17.5" height="17.5" viewBox="0 0 17.5 17.5"><circle cx="8.75" cy="8.75" r="8.25" fill="#93C993"/><path d="M4.55 9.1 L7.875 12.6 L13.3 4.9" stroke="#FFFFFF" stroke-width="2.275" fill="none"/></svg>
<div class="t" style="left:83.00px;top:367.80px;font-family:'Liberation Sans', sans-serif;font-size:15px;color:#717171;letter-spacing:-0.268px;">S05DateTimeAssertion</div>
<div class="t" style="left:238.00px;top:367.80px;font-family:'Liberation Sans', sans-serif;font-size:15px;color:#717171;letter-spacing:-0.727px;">(14)</div>
<div class="t" style="left:0.00px;top:367.80px;font-family:'Liberation Sans', sans-serif;font-size:15px;color:#717171;width:409px;text-align:right;">57 ms</div>
<svg class="r" style="left:45.2px;top:396.05px" width="7" height="10" viewBox="0 0 7 10"><polygon points="1,1 6,5 1,9" fill="none" stroke="#1E1E1E" stroke-width="1.3"/></svg>
<svg class="r" style="left:57.7px;top:392.55px" width="17.5" height="17.5" viewBox="0 0 17.5 17.5"><circle cx="8.75" cy="8.75" r="8.25" fill="#93C993"/><path d="M4.55 9.1 L7.875 12.6 L13.3 4.9" stroke="#FFFFFF" stroke-width="2.275" fill="none"/></svg>
<div class="t" style="left:83.00px;top:392.80px;font-family:'Liberation Sans', sans-serif;font-size:15px;color:#717171;letter-spacing:-0.134px;">S06TypeMethodPropertyAssembl...</div>
<div class="t" style="left:0.00px;top:392.80px;font-family:'Liberation Sans', sans-serif;font-size:15px;color:#717171;width:409px;text-align:right;">62 ms</div>
<svg class="r" style="left:45.2px;top:421.05px" width="7" height="10" viewBox="0 0 7 10"><polygon points="1,1 6,5 1,9" fill="none" stroke="#1E1E1E" stroke-width="1.3"/></svg>
<svg class="r" style="left:57.7px;top:417.55px" width="17.5" height="17.5" viewBox="0 0 17.5 17.5"><circle cx="8.75" cy="8.75" r="8.25" fill="#93C993"/><path d="M4.55 9.1 L7.875 12.6 L13.3 4.9" stroke="#FFFFFF" stroke-width="2.275" fill="none"/></svg>
<div class="t" style="left:83.00px;top:417.80px;font-family:'Liberation Sans', sans-serif;font-size:15px;color:#717171;letter-spacing:-0.239px;">S03StringAssertion</div>
<div class="t" style="left:213.75px;top:417.80px;font-family:'Liberation Sans', sans-serif;font-size:15px;color:#717171;letter-spacing:-0.81px;">(24)</div>
<div class="t" style="left:0.00px;top:417.80px;font-family:'Liberation Sans', sans-serif;font-size:15px;color:#717171;width:409px;text-align:right;">69 ms</div>
<svg class="r" style="left:45.2px;top:446.05px" width="7" height="10" viewBox="0 0 7 10"><polygon points="1,1 6,5 1,9" fill="none" stroke="#1E1E1E" stroke-width="1.3"/></svg>
<svg class="r" style="left:57.7px;top:442.55px" width="17.5" height="17.5" viewBox="0 0 17.5 17.5"><circle cx="8.75" cy="8.75" r="8.25" fill="#93C993"/><path d="M4.55 9.1 L7.875 12.6 L13.3 4.9" stroke="#FFFFFF" stroke-width="2.275" fill="none"/></svg>
<div class="t" style="left:83.00px;top:442.80px;font-family:'Liberation Sans', sans-serif;font-size:15px;color:#717171;letter-spacing:-0.456px;">S01BasicAssertion</div>
<div class="t" style="left:208.00px;top:442.80px;font-family:'Liberation Sans', sans-serif;font-size:15px;color:#717171;letter-spacing:-0.919px;">(3)</div>
<div class="t" style="left:0.00px;top:442.80px;font-family:'Liberation Sans', sans-serif;font-size:15px;color:#717171;width:409px;text-align:right;">99 ms</div>
<svg class="r" style="left:45.2px;top:471.05px" width="7" height="10" viewBox="0 0 7 10"><polygon points="1,1 6,5 1,9" fill="none" stroke="#1E1E1E" stroke-width="1.3"/></svg>
<svg class="r" style="left:57.7px;top:467.55px" width="17.5" height="17.5" viewBox="0 0 17.5 17.5"><circle cx="8.75" cy="8.75" r="8.25" fill="#93C993"/><path d="M4.55 9.1 L7.875 12.6 L13.3 4.9" stroke="#FFFFFF" stroke-width="2.275" fill="none"/></svg>
<div class="t" style="left:83.00px;top:467.80px;font-family:'Liberation Sans', sans-serif;font-size:15px;color:#717171;letter-spacing:-0.167px;">S04NumericIComparableAssertion</div>
<div class="t" style="left:0.00px;top:467.80px;font-family:'Liberation Sans', sans-serif;font-size:15px;color:#717171;width:409px;text-align:right;">188 ms</div>
<svg class="r" style="left:42.7px;top:496.55px" width="8" height="8" viewBox="0 0 8 8"><polygon points="7.5,0.5 7.5,7.5 0.5,7.5" fill="#1E1E1E"/></svg>
<svg class="r" style="left:57.7px;top:492.55px" width="17.5" height="17.5" viewBox="0 0 17.5 17.5"><circle cx="8.75" cy="8.75" r="8.25" fill="#E51400"/><path d="M5.25 5.25 L12.25 12.25 M12.25 5.25 L5.25 12.25" stroke="#FFFFFF" stroke-width="2.45"/></svg>
<div class="t" style="left:83.00px;top:492.80px;font-family:'Liberation Sans', sans-serif;font-size:15px;color:#1E1E1E;letter-spacing:-0.207px;">S1001IntCollectionAssert</div>
<div class="t" style="left:253.75px;top:492.80px;font-family:'Liberation Sans', sans-serif;font-size:15px;color:#1E1E1E;letter-spacing:-1.044px;">(1)</div>
<div class="t" style="left:0.00px;top:492.80px;font-family:'Liberation Sans', sans-serif;font-size:15px;color:#1E1E1E;width:409px;text-align:right;">912 ms</div>
<svg class="r" style="left:70.3px;top:517.55px" width="17.5" height="17.5" viewBox="0 0 17.5 17.5"><circle cx="8.75" cy="8.75" r="8.25" fill="#E51400"/><path d="M5.25 5.25 L12.25 12.25 M12.25 5.25 L5.25 12.25" stroke="#FFFFFF" stroke-width="2.45"/></svg>
<div class="t" style="left:94.50px;top:517.80px;font-family:'Liberation Sans', sans-serif;font-size:15px;color:#1E1E1E;letter-spacing:-0.055px;">IntCollectionTest</div>
<div class="t" style="left:0.00px;top:517.80px;font-family:'Liberation Sans', sans-serif;font-size:15px;color:#1E1E1E;width:409px;text-align:right;">912 ms</div>
<svg class="r" style="left:45.2px;top:546.05px" width="7" height="10" viewBox="0 0 7 10"><polygon points="1,1 6,5 1,9" fill="none" stroke="#1E1E1E" stroke-width="1.3"/></svg>
<svg class="r" style="left:57.7px;top:542.55px" width="17.5" height="17.5" viewBox="0 0 17.5 17.5"><circle cx="8.75" cy="8.75" r="8.25" fill="#93C993"/><path d="M4.55 9.1 L7.875 12.6 L13.3 4.9" stroke="#FFFFFF" stroke-width="2.275" fill="none"/></svg>
<div class="t" style="left:83.00px;top:542.80px;font-family:'Liberation Sans', sans-serif;font-size:15px;color:#717171;letter-spacing:-0.43px;">S07ActionThreadTask</div>
<div class="t" style="left:229.50px;top:542.80px;font-family:'Liberation Sans', sans-serif;font-size:15px;color:#717171;letter-spacing:-0.794px;">(4)</div>
<div class="t" style="left:0.00px;top:542.80px;font-family:'Liberation Sans', sans-serif;font-size:15px;color:#717171;width:409px;text-align:right;">1 sec</div>
</div>
<div class="r" style="left:456px;top:271px;width:11px;height:271px;background:#C2C3C9;"></div>
<svg class="r" style="left:457px;top:549px" width="10" height="6" viewBox="0 0 10 6"><polygon points="0,0 10,0 5.0,6" fill="#868999"/></svg>
<svg class="r" style="left:16px;top:568px" width="7" height="11" viewBox="0 0 7 11"><polygon points="7,0 7,11 0,5.5" fill="#868999"/></svg>
<div class="r" style="left:30px;top:568px;width:331px;height:10.5px;background:#C2C3C9;"></div>
<svg class="r" style="left:436px;top:568px" width="7" height="11" viewBox="0 0 7 11"><polygon points="0,0 0,11 7,5.5" fill="#868999"/></svg>
<div class="r" style="left:15px;top:587px;width:457px;height:2px;background:#E8E8EC;"></div>
<div class="r" style="left:0;top:0;width:1920px;height:1080px;clip-path:inset(589px 1448px 150px 20.5px)">
<div class="t" style="left:19.00px;top:592.76px;font-family:'Liberation Sans', sans-serif;font-size:18px;color:#1E1E1E;font-weight:700;">t</div>
<div class="t" style="left:29.00px;top:592.76px;font-family:'Liberation Sans', sans-serif;font-size:18px;color:#1E1E1E;font-weight:700;letter-spacing:-0.696px;">Detail Summary</div>
<svg class="r" style="left:11.5px;top:623px" width="17" height="18" viewBox="0 0 17 18"><circle cx="8" cy="9" r="8.2" fill="#E51400"/><path d="M4.5 5.5 L11.5 12.5 M11.5 5.5 L4.5 12.5" stroke="#FFFFFF" stroke-width="2.4"/></svg>
</div>
<div class="t" style="left:38.40px;top:624.15px;font-family:'Liberation Sans', sans-serif;font-size:16px;color:#1E1E1E;letter-spacing:-0.022px;">IntCollectionTest</div>
<svg class="r" style="left:31px;top:650px" width="14" height="16" viewBox="0 0 14 16"><rect x="1" y="1" width="11.5" height="14" fill="#F0F0F0" stroke="#717171" stroke-width="1.5"/><path d="M3.5 4.5 H9.5 M3.5 7.5 H9.5 M3.5 10.5 H9.5" stroke="#9A9A9A" stroke-width="1.2"/></svg>
<div class="t" style="left:57.00px;top:649.80px;font-family:'Liberation Sans', sans-serif;font-size:15px;color:#1E1E1E;letter-spacing:0.746px;">Source:</div>
<div class="t" style="left:123.00px;top:651.10px;font-family:'Liberation Mono', monospace;font-size:14.88px;color:#2626A8;text-decoration:underline;text-underline-offset:2px;">S1001IntCollectionAssert.cs</div>
<div class="t" style="left:372.75px;top:649.90px;font-family:'Liberation Sans', sans-serif;font-size:15px;color:#1E1E1E;letter-spacing:0.748px;">line</div>
<div class="t" style="left:408.00px;top:649.90px;font-family:'Liberation Sans', sans-serif;font-size:15px;color:#1E1E1E;letter-spacing:0.658px;">79</div>
<svg class="r" style="left:28px;top:675px" width="19" height="19" viewBox="0 0 19 19"><circle cx="9.5" cy="9.5" r="8" fill="none" stroke="#717171" stroke-width="1.6"/><path d="M9 4.5 V10 H13.5" stroke="#717171" stroke-width="1.6" fill="none"/></svg>
<div class="t" style="left:56.50px;top:677.30px;font-family:'Liberation Sans', sans-serif;font-size:15px;color:#1E1E1E;letter-spacing:1.1px;">Duration:</div>
<div class="t" style="left:137.00px;top:678.60px;font-family:'Liberation Mono', monospace;font-size:14.88px;color:#1E1E1E;">912 ms</div>
<div class="t" style="left:27.30px;top:712.30px;font-family:'Liberation Sans', sans-serif;font-size:15px;color:#1E1E1E;letter-spacing:0.791px;">Message:</div>
<div class="r" style="left:170px;top:754px;width:92px;height:22px;background:#E3E5EC;"></div>
<div class="t" style="left:63.50px;top:735.30px;font-family:'Liberation Mono', monospace;font-size:14.88px;color:#1E1E1E;white-space:pre;">Expected: all items not null</div>
<div class="t" style="left:63.50px;top:756.90px;font-family:'Liberation Mono', monospace;font-size:14.88px;color:#1E1E1E;white-space:pre;">But was:  &lt; 2, 5, null &gt;</div>
<div class="t" style="left:63.50px;top:780.30px;font-family:'Liberation Mono', monospace;font-size:14.88px;color:#1E1E1E;white-space:pre;">First non-matching item at index [2]:  null</div>
<div class="t" style="left:28.00px;top:826.30px;font-family:'Liberation Sans', sans-serif;font-size:15px;color:#1E1E1E;letter-spacing:0.185px;">Stack Trace:</div>
<div class="r" style="left:0;top:0;width:1920px;height:1080px;clip-path:inset(840px 1448px 200px 9px)">
<div class="t" style="left:45.00px;top:850.30px;font-family:'Liberation Mono', monospace;font-size:14.88px;color:#E05252;white-space:pre;text-decoration:underline;text-underline-offset:2px;">S1001IntCollectionAssert.IntCollectionTest()</div>
<div class="t" style="left:437.83px;top:850.30px;font-family:'Liberation Mono', monospace;font-size:14.88px;color:#1E1E1E;white-space:pre;"> lin</div>
</div>
<svg class="r" style="left:28px;top:933px" width="7" height="11" viewBox="0 0 7 11"><polygon points="7,0 7,11 0,5.5" fill="#868999"/></svg>
<div class="r" style="left:63px;top:933px;width:343px;height:10.5px;background:#C2C3C9;"></div>
<svg class="r" style="left:457px;top:933px" width="7" height="11" viewBox="0 0 7 11"><polygon points="0,0 0,11 7,5.5" fill="#868999"/></svg>
<div class="r" style="left:8px;top:949px;width:99px;height:25px;background:#F5F5F5;box-sizing:border-box;border:1px solid #CCCEDB;border-top:none;"></div>
<div class="t" style="left:15.80px;top:954.00px;font-family:'Liberation Sans', sans-serif;font-size:15px;color:#0E70C0;letter-spacing:-0.278px;">Test Explorer</div>
<div class="t" style="left:114.20px;top:954.00px;font-family:'Liberation Sans', sans-serif;font-size:15px;color:#1E1E1E;letter-spacing:-0.365px;">Server Explorer</div>
<div class="t" style="left:228.30px;top:954.00px;font-family:'Liberation Sans', sans-serif;font-size:15px;color:#1E1E1E;letter-spacing:0.2px;">Toolbox</div>
<div class="t" style="left:7.30px;top:984.00px;font-family:'Liberation Sans', sans-serif;font-size:15px;color:#1E1E1E;letter-spacing:-0.282px;">Package Manager Console</div>
<div class="t" style="left:197.50px;top:984.00px;font-family:'Liberation Sans', sans-serif;font-size:15px;color:#1E1E1E;letter-spacing:-0.172px;">Output</div>
<div class="t" style="left:257.30px;top:984.00px;font-family:'Liberation Sans', sans-serif;font-size:15px;color:#1E1E1E;letter-spacing:-0.353px;">Error List</div>
<div class="r" style="left:8px;top:1005px;width:174px;height:8px;background:#CCCEDB;"></div>
<div class="r" style="left:197px;top:1005px;width:46px;height:8px;background:#CCCEDB;"></div>
<div class="r" style="left:258px;top:1005px;width:58px;height:8px;background:#CCCEDB;"></div>
<div class="r" style="left:482px;top:129px;width:242px;height:27px;background:#007ACC;"></div>
<div class="t" style="left:487.40px;top:134.90px;font-family:'Liberation Sans', sans-serif;font-size:15px;color:#FFFFFF;letter-spacing:-0.296px;">S1001IntCollectionAssert.cs</div>
<svg class="r" style="left:679px;top:136px" width="12" height="12" viewBox="0 0 12 12"><path d="M3 1 H9 M4.5 1 V7 M7.5 1 V7 M1.5 7 H10.5 M6 7 V11.5" stroke="#FFFFFF" stroke-width="1.5" fill="none"/></svg>
<svg class="r" style="left:704px;top:137px" width="12" height="11" viewBox="0 0 12 11"><path d="M1 0.5 L11 10.5 M11 0.5 L1 10.5" stroke="#FFFFFF" stroke-width="1.6"/></svg>
<div class="r" style="left:482px;top:154px;width:1398px;height:2px;background:#007ACC;"></div>
<svg class="r" style="left:1868px;top:141px" width="9" height="5" viewBox="0 0 9 5"><polygon points="0,0 9,0 4.5,5" fill="#717171"/></svg>
<div class="r" style="left:482px;top:156px;width:1398px;height:25px;background:#FFFFFF;"></div>
<div class="r" style="left:482px;top:181px;width:1398px;height:2px;background:#CCCEDB;"></div>
<svg class="r" style="left:487px;top:162px" width="18" height="15" viewBox="0 0 18 15"><rect x="0.75" y="0.75" width="16.5" height="13.5" fill="#FFFFFF" stroke="#5E9E5E" stroke-width="1.5"/><text x="2.5" y="11" font-family="Liberation Sans" font-weight="700" font-size="9.5" fill="#1E1E1E">C#</text></svg>
<div class="t" style="left:508.50px;top:161.30px;font-family:'Liberation Sans', sans-serif;font-size:15px;color:#1E1E1E;letter-spacing:-0.328px;">OnlineGame.NUnit</div>
<svg class="r" style="left:933px;top:168px" width="7" height="4" viewBox="0 0 7 4"><polygon points="0,0 7,0 3.5,4" fill="#717171"/></svg>
<div class="r" style="left:944px;top:156px;width:6px;height:25px;background:#CCCEDB;"></div>
<svg class="r" style="left:954px;top:159px" width="18" height="19" viewBox="0 0 18 19"><path d="M1 6 L6 1 L10 5 L5 10 Z" fill="#E3931E"/><path d="M7.5 7.5 V14 H12" stroke="#B07A2A" stroke-width="1.2" fill="none"/><path d="M10.5 8 L13.5 5.5 L16.5 8.5 L13.5 11 Z M10.5 14.5 L13.5 12 L16.5 15 L13.5 17.5 Z" fill="#E3931E"/></svg>
<div class="t" style="left:975.60px;top:161.30px;font-family:'Liberation Sans', sans-serif;font-size:15px;color:#1E1E1E;letter-spacing:-0.248px;">OnlineGame.NUnit.S1001IntCollectionAssert</div>
<svg class="r" style="left:1401px;top:168px" width="7" height="4" viewBox="0 0 7 4"><polygon points="0,0 7,0 3.5,4" fill="#717171"/></svg>
<div class="r" style="left:1412px;top:156px;width:6px;height:25px;background:#CCCEDB;"></div>
<svg class="r" style="left:1421px;top:163px" width="12" height="12" viewBox="0 0 12 12"><path d="M6 1 L11 3.5 V8.5 L6 11 L1 8.5 V3.5 Z M1 3.5 L6 6 L11 3.5 M6 6 V11" fill="none" stroke="#652D90" stroke-width="1"/></svg>
<div class="t" style="left:1443.00px;top:161.30px;font-family:'Liberation Sans', sans-serif;font-size:15px;color:#1E1E1E;letter-spacing:-0.042px;">IntCollectionTest()</div>
<svg class="r" style="left:1868px;top:168px" width="7" height="4" viewBox="0 0 7 4"><polygon points="0,0 7,0 3.5,4" fill="#717171"/></svg>
<div class="r" style="left:482px;top:183px;width:1365px;height:769px;background:#FFFFFF;"></div>
<div class="r" style="left:482px;top:183px;width:25px;height:769px;background:#E8E8EB;"></div>
<div class="r" style="left:588px;top:183px;width:7px;height:769px;background:#6BDC6B;"></div>
<div class="r" style="left:605px;top:183px;width:2px;height:769px;background:#A5A5A5;"></div>
<div class="r" style="left:618px;top:183px;width:1.3px;height:769px;background:repeating-linear-gradient(to bottom,transparent 0,transparent 1.5px,#BDBDBD 1.5px,#BDBDBD 5px,transparent 5px,transparent 8.7px);"></div>
<div class="r" style="left:660px;top:183px;width:1.3px;height:769px;background:repeating-linear-gradient(to bottom,transparent 0,transparent 1.5px,#BDBDBD 1.5px,#BDBDBD 5px,transparent 5px,transparent 8.7px);"></div>
<div class="r" style="left:701px;top:183px;width:1.3px;height:769px;background:repeating-linear-gradient(to bottom,transparent 0,transparent 1.5px,#BDBDBD 1.5px,#BDBDBD 5px,transparent 5px,transparent 8.7px);"></div>
<div class="r" style="left:0;top:0;width:1920px;height:1080px;clip-path:inset(183px 73px 128px 482px)">
<div class="r" style="left:917.2px;top:480.5px;width:187.8px;height:74.2px;background:#E2E2D7;"></div>
<div class="r" style="left:917.2px;top:554.7px;width:187.8px;height:25.8px;background:#8AB4DC;"></div>
<div class="r" style="left:1105px;top:555px;width:9.8px;height:25.2px;background:#E9E9E2;"></div>
<div class="r" style="left:1345.4px;top:555.2px;width:10.4px;height:25px;background:#E9E9E2;"></div>
<div class="t" style="left:0.00px;top:186.06px;font-family:'Liberation Mono', monospace;font-size:18.2px;color:#2B84A6;letter-spacing:-0.6px;width:583px;text-align:right;">301</div>
<div class="t" style="left:739.30px;top:186.66px;font-family:'Liberation Mono', monospace;font-size:17.41px;color:#000000;white-space:pre;"><span class="cd"><span style="color:#16803C;">//7.1.1.2.</span></span></div>
<div class="t" style="left:0.00px;top:210.92px;font-family:'Liberation Mono', monospace;font-size:18.2px;color:#2B84A6;letter-spacing:-0.6px;width:583px;text-align:right;">302</div>
<div class="t" style="left:739.30px;top:211.52px;font-family:'Liberation Mono', monospace;font-size:17.41px;color:#000000;white-space:pre;"><span class="cd"><span style="color:#16803C;">//CollectionAssert.Contains() verifies</span></span></div>
<div class="t" style="left:0.00px;top:235.78px;font-family:'Liberation Mono', monospace;font-size:18.2px;color:#2B84A6;letter-spacing:-0.6px;width:583px;text-align:right;">303</div>
<div class="t" style="left:739.30px;top:236.38px;font-family:'Liberation Mono', monospace;font-size:17.41px;color:#000000;white-space:pre;"><span class="cd"><span style="color:#16803C;">//if the collection contains a single item.</span></span></div>
<div class="t" style="left:0.00px;top:260.64px;font-family:'Liberation Mono', monospace;font-size:18.2px;color:#2B84A6;letter-spacing:-0.6px;width:583px;text-align:right;">304</div>
<div class="t" style="left:739.30px;top:261.24px;font-family:'Liberation Mono', monospace;font-size:17.41px;color:#000000;white-space:pre;"><span class="cd"><span style="color:#16803C;">//CollectionAssert.IsSubsetOf() verifies</span></span></div>
<div class="t" style="left:0.00px;top:285.50px;font-family:'Liberation Mono', monospace;font-size:18.2px;color:#2B84A6;letter-spacing:-0.6px;width:583px;text-align:right;">305</div>
<div class="t" style="left:739.30px;top:286.10px;font-family:'Liberation Mono', monospace;font-size:17.41px;color:#000000;white-space:pre;"><span class="cd"><span style="color:#16803C;">//if the collection contains a subset of items.</span></span></div>
<div class="t" style="left:0.00px;top:310.36px;font-family:'Liberation Mono', monospace;font-size:18.2px;color:#2B84A6;letter-spacing:-0.6px;width:583px;text-align:right;">306</div>
<div class="t" style="left:739.30px;top:310.96px;font-family:'Liberation Mono', monospace;font-size:17.41px;color:#000000;white-space:pre;"><span class="cd"><span style="color:#2B91AF;">CollectionAssert</span><span style="color:#000000;">.</span><span style="color:#74531F;">Contains</span><span style="color:#000000;">(</span><span style="color:#1F377F;">collection1</span><span style="color:#000000;">, </span><span style="display:inline-block;width:63px;height:10px;position:relative;vertical-align:baseline;"><span style="position:absolute;left:2px;top:-6.3px;width:59px;height:19.4px;background:#F4F4F4;"></span><span style="position:absolute;left:4.5px;top:0px;font-size:12.9px;line-height:12.9px;color:#A6A6BC;white-space:pre;">actual:</span></span><span style="color:#8A8A8A;">(</span><span style="color:#9C9CDC;">object</span><span style="color:#8A8A8A;">)</span><span style="color:#000000;">1); </span><span style="color:#16803C;">//Passed</span></span></div>
<div class="t" style="left:0.00px;top:335.22px;font-family:'Liberation Mono', monospace;font-size:18.2px;color:#2B84A6;letter-spacing:-0.6px;width:583px;text-align:right;">307</div>
<div class="t" style="left:739.30px;top:335.82px;font-family:'Liberation Mono', monospace;font-size:17.41px;color:#000000;white-space:pre;"><span class="cd"><span style="color:#16803C;">//CollectionAssert.Contains(collection1, (object)3); //Failed</span></span></div>
<div class="t" style="left:0.00px;top:360.08px;font-family:'Liberation Mono', monospace;font-size:18.2px;color:#2B84A6;letter-spacing:-0.6px;width:583px;text-align:right;">308</div>
<div class="t" style="left:739.30px;top:360.68px;font-family:'Liberation Mono', monospace;font-size:17.41px;color:#000000;white-space:pre;"><span class="cd"><span style="color:#16803C;">//----------------------</span></span></div>
<div class="t" style="left:0.00px;top:384.94px;font-family:'Liberation Mono', monospace;font-size:18.2px;color:#2B84A6;letter-spacing:-0.6px;width:583px;text-align:right;">309</div>
<div class="t" style="left:739.30px;top:385.54px;font-family:'Liberation Mono', monospace;font-size:17.41px;color:#000000;white-space:pre;"><span class="cd"><span style="color:#16803C;">//7.1.2.</span></span></div>
<div class="t" style="left:0.00px;top:409.80px;font-family:'Liberation Mono', monospace;font-size:18.2px;color:#2B84A6;letter-spacing:-0.6px;width:583px;text-align:right;">310</div>
<div class="t" style="left:739.30px;top:410.40px;font-family:'Liberation Mono', monospace;font-size:17.41px;color:#000000;white-space:pre;"><span class="cd"><span style="color:#16803C;">//MSTest&amp;NUnit: AllItemsAreNotNull()</span></span></div>
<div class="t" style="left:0.00px;top:434.66px;font-family:'Liberation Mono', monospace;font-size:18.2px;color:#2B84A6;letter-spacing:-0.6px;width:583px;text-align:right;">311</div>
<div class="t" style="left:739.30px;top:435.26px;font-family:'Liberation Mono', monospace;font-size:17.41px;color:#000000;white-space:pre;"><span class="cd"><span style="color:#16803C;">////CollectionAssert.AllItemsAreNotNull(collection) verifies</span></span></div>
<div class="t" style="left:0.00px;top:459.52px;font-family:'Liberation Mono', monospace;font-size:18.2px;color:#2B84A6;letter-spacing:-0.6px;width:583px;text-align:right;">312</div>
<div class="t" style="left:739.30px;top:460.12px;font-family:'Liberation Mono', monospace;font-size:17.41px;color:#000000;white-space:pre;"><span class="cd"><span style="color:#16803C;">//if the collection contains null value then return failed.</span></span></div>
<div class="t" style="left:0.00px;top:484.38px;font-family:'Liberation Mono', monospace;font-size:18.2px;color:#2B84A6;letter-spacing:-0.6px;width:583px;text-align:right;">313</div>
<div class="t" style="left:739.30px;top:484.98px;font-family:'Liberation Mono', monospace;font-size:17.41px;color:#000000;white-space:pre;"><span class="cd"><span style="color:#2B91AF;">CollectionAssert</span><span style="color:#000000;">.</span><span style="color:#74531F;">AllItemsAreNotNull</span><span style="color:#000000;">(</span><span style="color:#1F377F;">collection1</span><span style="color:#000000;">);   </span><span style="color:#16803C;">//Passed</span></span></div>
<div class="t" style="left:0.00px;top:509.24px;font-family:'Liberation Mono', monospace;font-size:18.2px;color:#2B84A6;letter-spacing:-0.6px;width:583px;text-align:right;">314</div>
<div class="t" style="left:739.30px;top:509.84px;font-family:'Liberation Mono', monospace;font-size:17.41px;color:#000000;white-space:pre;"><span class="cd"><span style="color:#2B91AF;">CollectionAssert</span><span style="color:#000000;">.</span><span style="color:#74531F;">AllItemsAreNotNull</span><span style="color:#000000;">(</span><span style="color:#1F377F;">collection2</span><span style="color:#000000;">);   </span><span style="color:#16803C;">//Passed</span></span></div>
<div class="t" style="left:0.00px;top:534.10px;font-family:'Liberation Mono', monospace;font-size:18.2px;color:#2B84A6;letter-spacing:-0.6px;width:583px;text-align:right;">315</div>
<div class="t" style="left:739.30px;top:534.70px;font-family:'Liberation Mono', monospace;font-size:17.41px;color:#000000;white-space:pre;"><span class="cd"><span style="color:#2B91AF;">CollectionAssert</span><span style="color:#000000;">.</span><span style="color:#74531F;">AllItemsAreNotNull</span><span style="color:#000000;">(</span><span style="color:#1F377F;">collection3</span><span style="color:#000000;">);   </span><span style="color:#16803C;">//Passed</span></span></div>
<div class="t" style="left:0.00px;top:558.96px;font-family:'Liberation Mono', monospace;font-size:18.2px;color:#2B84A6;letter-spacing:-0.6px;width:583px;text-align:right;">316</div>
<div class="t" style="left:739.30px;top:559.56px;font-family:'Liberation Mono', monospace;font-size:17.41px;color:#000000;white-space:pre;"><span class="cd"><span style="color:#2B91AF;">CollectionAssert</span><span style="color:#000000;">.</span><span style="color:#5E4A28;">AllItemsAreNotNull</span><span style="color:#000000;">(</span><span style="color:#1F377F;">collection6ContainNull</span><span style="color:#000000;">)</span><span style="color:#000000;">;  </span><span style="color:#16803C;">//Failed</span></span></div>
<div class="t" style="left:0.00px;top:583.82px;font-family:'Liberation Mono', monospace;font-size:18.2px;color:#2B84A6;letter-spacing:-0.6px;width:583px;text-align:right;">317</div>
<div class="t" style="left:739.30px;top:584.42px;font-family:'Liberation Mono', monospace;font-size:17.41px;color:#000000;white-space:pre;"><span class="cd"><span style="color:#16803C;">//-----------------------------</span></span></div>
<div class="t" style="left:0.00px;top:608.68px;font-family:'Liberation Mono', monospace;font-size:18.2px;color:#2B84A6;letter-spacing:-0.6px;width:583px;text-align:right;">318</div>
<div class="t" style="left:739.30px;top:609.28px;font-family:'Liberation Mono', monospace;font-size:17.41px;color:#000000;white-space:pre;"><span class="cd"><span style="color:#16803C;">//7.2.</span></span></div>
<div class="t" style="left:0.00px;top:633.54px;font-family:'Liberation Mono', monospace;font-size:18.2px;color:#2B84A6;letter-spacing:-0.6px;width:583px;text-align:right;">319</div>
<div class="t" style="left:739.30px;top:634.14px;font-family:'Liberation Mono', monospace;font-size:17.41px;color:#000000;white-space:pre;"><span class="cd"><span style="color:#16803C;">//FluentAssertion: Contain(), NotContain(), NotContainNulls()</span></span></div>
<div class="t" style="left:0.00px;top:658.40px;font-family:'Liberation Mono', monospace;font-size:18.2px;color:#2B84A6;letter-spacing:-0.6px;width:583px;text-align:right;">320</div>
<div class="t" style="left:739.30px;top:659.00px;font-family:'Liberation Mono', monospace;font-size:17.41px;color:#000000;white-space:pre;"><span class="cd"><span style="color:#16803C;">//----------------------</span></span></div>
<div class="t" style="left:0.00px;top:683.26px;font-family:'Liberation Mono', monospace;font-size:18.2px;color:#2B84A6;letter-spacing:-0.6px;width:583px;text-align:right;">321</div>
<div class="t" style="left:739.30px;top:683.86px;font-family:'Liberation Mono', monospace;font-size:17.41px;color:#000000;white-space:pre;"><span class="cd"><span style="color:#16803C;">//7.2.1.</span></span></div>
<div class="t" style="left:0.00px;top:708.12px;font-family:'Liberation Mono', monospace;font-size:18.2px;color:#2B84A6;letter-spacing:-0.6px;width:583px;text-align:right;">322</div>
<div class="t" style="left:739.30px;top:708.72px;font-family:'Liberation Mono', monospace;font-size:17.41px;color:#000000;white-space:pre;"><span class="cd"><span style="color:#16803C;">//FluentAssertion : Contain(), NotContain()</span></span></div>
<div class="t" style="left:0.00px;top:732.98px;font-family:'Liberation Mono', monospace;font-size:18.2px;color:#2B84A6;letter-spacing:-0.6px;width:583px;text-align:right;">323</div>
<div class="t" style="left:739.30px;top:733.58px;font-family:'Liberation Mono', monospace;font-size:17.41px;color:#000000;white-space:pre;"><span class="cd"><span style="color:#16803C;">//-----------------</span></span></div>
<div class="t" style="left:0.00px;top:757.84px;font-family:'Liberation Mono', monospace;font-size:18.2px;color:#2B84A6;letter-spacing:-0.6px;width:583px;text-align:right;">324</div>
<div class="t" style="left:739.30px;top:758.44px;font-family:'Liberation Mono', monospace;font-size:17.41px;color:#000000;white-space:pre;"><span class="cd"><span style="color:#16803C;">//7.2.1.1.</span></span></div>
<div class="t" style="left:0.00px;top:782.70px;font-family:'Liberation Mono', monospace;font-size:18.2px;color:#2B84A6;letter-spacing:-0.6px;width:583px;text-align:right;">325</div>
<div class="t" style="left:739.30px;top:783.30px;font-family:'Liberation Mono', monospace;font-size:17.41px;color:#000000;white-space:pre;"><span class="cd"><span style="color:#16803C;">//FluentAssertion : Contain()</span></span></div>
<div class="t" style="left:0.00px;top:807.56px;font-family:'Liberation Mono', monospace;font-size:18.2px;color:#2B84A6;letter-spacing:-0.6px;width:583px;text-align:right;">326</div>
<div class="t" style="left:739.30px;top:808.16px;font-family:'Liberation Mono', monospace;font-size:17.41px;color:#000000;white-space:pre;"><span class="cd"><span style="color:#16803C;">//Asserts that the collection contains at least one item that matches the predicate or the expected</span></span></div>
<div class="t" style="left:739.30px;top:833.02px;font-family:'Liberation Mono', monospace;font-size:17.41px;color:#000000;white-space:pre;"><span class="cd"><span style="color:#16803C;">  IEnumerable&lt;T&gt;</span></span></div>
<div class="t" style="left:0.00px;top:857.28px;font-family:'Liberation Mono', monospace;font-size:18.2px;color:#2B84A6;letter-spacing:-0.6px;width:583px;text-align:right;">327</div>
<div class="t" style="left:739.30px;top:857.88px;font-family:'Liberation Mono', monospace;font-size:17.41px;color:#000000;white-space:pre;"><span class="cd"><span style="color:#1F377F;">collection1</span><span style="color:#000000;">.</span><span style="color:#74531F;">Should</span><span style="color:#000000;">().</span><span style="color:#74531F;">Contain</span><span style="color:#000000;">(</span><span style="color:#1F377F;">collection2</span><span style="color:#000000;">); </span><span style="color:#16803C;">//Passed, {1, 2, 5, 8} contain {1, 2, 5, 8}</span></span></div>
<div class="t" style="left:0.00px;top:882.14px;font-family:'Liberation Mono', monospace;font-size:18.2px;color:#2B84A6;letter-spacing:-0.6px;width:583px;text-align:right;">328</div>
<div class="t" style="left:739.30px;top:882.74px;font-family:'Liberation Mono', monospace;font-size:17.41px;color:#000000;white-space:pre;"><span class="cd"><span style="color:#1F377F;">collection1</span><span style="color:#000000;">.</span><span style="color:#74531F;">Should</span><span style="color:#000000;">().</span><span style="color:#74531F;">Contain</span><span style="color:#000000;">(</span><span style="color:#1F377F;">collection5</span><span style="color:#000000;">); </span><span style="color:#16803C;">//Passed, {1, 2, 5, 8} contain { 2, 5 }</span></span></div>
<div class="t" style="left:0.00px;top:907.00px;font-family:'Liberation Mono', monospace;font-size:18.2px;color:#2B84A6;letter-spacing:-0.6px;width:583px;text-align:right;">329</div>
<div class="t" style="left:739.30px;top:907.60px;font-family:'Liberation Mono', monospace;font-size:17.41px;color:#000000;white-space:pre;"><span class="cd"><span style="color:#16803C;">//collection1.Should().Contain(collection4, &quot;{0} should contain {1}&quot;, &quot;collection1&quot;, &quot;collection4&quot;); //</span></span></div>
<div class="t" style="left:739.30px;top:932.46px;font-family:'Liberation Mono', monospace;font-size:17.41px;color:#000000;white-space:pre;"><span class="cd"><span style="color:#16803C;">  Failed</span></span></div>
</div>
<div class="r" style="left:482px;top:156px;width:1px;height:817px;background:#CCCEDB;"></div>
<svg class="r" style="left:509px;top:554px" width="20" height="24" viewBox="0 0 20 24"><rect x="8.2" y="1" width="3.8" height="8.3" fill="#1E1E1E"/><path d="M2 12 C2.5 9.8 4.5 8.8 7 8.5 M13.2 8.5 C15.7 8.8 17.7 9.8 18.2 12" stroke="#1E1E1E" stroke-width="1.8" fill="none"/><rect x="1.5" y="11" width="17" height="4.8" fill="#1E1E1E" rx="0.5"/><rect x="2.2" y="18" width="1.7" height="4" fill="#1E1E1E"/><rect x="5.2" y="18" width="1.7" height="4" fill="#1E1E1E"/><rect x="8.2" y="18" width="1.7" height="4" fill="#1E1E1E"/><rect x="11.2" y="18" width="1.7" height="4" fill="#1E1E1E"/><rect x="14.2" y="18" width="1.7" height="4" fill="#1E1E1E"/><rect x="17.2" y="18" width="1.7" height="4" fill="#1E1E1E"/></svg>
<svg class="r" style="left:1119px;top:551px" width="11" height="17" viewBox="0 0 11 17"><path d="M1 0.5 H10 M5.5 0.5 V16.5 M1 16.5 H10" stroke="#000000" stroke-width="1.2" fill="none"/></svg>
<svg class="r" style="left:1831px;top:811px" width="14" height="12" viewBox="0 0 14 12"><path d="M1 4.5 C1 0.5 13 0.5 13 4.5 C13 8 8 8.5 4 8.5" stroke="#2E8BC0" stroke-width="1.6" fill="none"/><path d="M7 5.5 L4 8.5 L7 11.5" stroke="#2E8BC0" stroke-width="1.6" fill="none"/></svg>
<svg class="r" style="left:1831px;top:911px" width="14" height="12" viewBox="0 0 14 12"><path d="M1 4.5 C1 0.5 13 0.5 13 4.5 C13 8 8 8.5 4 8.5" stroke="#2E8BC0" stroke-width="1.6" fill="none"/><path d="M7 5.5 L4 8.5 L7 11.5" stroke="#2E8BC0" stroke-width="1.6" fill="none"/></svg>
<div class="r" style="left:1169px;top:580px;width:379px;height:39px;background:#F6F6F6;box-sizing:border-box;border:1px solid #CCCEDB;"></div>
<svg class="r" style="left:1185px;top:594px" width="20" height="12" viewBox="0 0 20 12"><path d="M4.6 1.2 H1.6 V10.6 H4.6 M15.4 1.2 H18.4 V10.6 H15.4" stroke="#3C3C3C" stroke-width="1.9" fill="none"/><polygon points="5.3,5 10.6,0.9 14.8,3.6 14.8,6.6 9.6,9.8 5.3,7.6" fill="#353535"/><path d="M7.6 4.6 L10.9 2.4" stroke="#FFFFFF" stroke-width="1.3"/></svg>
<div class="t" style="left:1211.00px;top:593.10px;font-family:'Liberation Sans', sans-serif;font-size:15px;color:#1E1E1E;letter-spacing:-0.016px;">(local variable)</div>
<div class="t" style="left:1313.00px;top:593.10px;font-family:'Liberation Sans', sans-serif;font-size:15px;color:#2B91AF;letter-spacing:-0.758px;">List</div>
<div class="t" style="left:1336.70px;top:593.10px;font-family:'Liberation Sans', sans-serif;font-size:15px;color:#1E1E1E;">&lt;</div>
<div class="t" style="left:1344.80px;top:593.10px;font-family:'Liberation Sans', sans-serif;font-size:15px;color:#0000FF;letter-spacing:0.263px;">int</div>
<div class="t" style="left:1363.30px;top:593.10px;font-family:'Liberation Sans', sans-serif;font-size:15px;color:#1E1E1E;">?</div>
<div class="t" style="left:1370.30px;top:593.10px;font-family:'Liberation Sans', sans-serif;font-size:15px;color:#1E1E1E;">&gt;</div>
<div class="t" style="left:1383.60px;top:593.10px;font-family:'Liberation Sans', sans-serif;font-size:15px;color:#1F377F;letter-spacing:0.063px;">collection6ContainNull</div>
<div class="r" style="left:1847px;top:183px;width:33px;height:769px;background:#F5F5F5;"></div>
<div class="r" style="left:1880px;top:183px;width:1px;height:790px;background:#CCCEDB;"></div>
<div class="r" style="left:1847px;top:203px;width:33px;height:1px;background:#E0E0E0;"></div>
<svg class="r" style="left:1855px;top:186px" width="16" height="17" viewBox="0 0 16 17"><path d="M1 6.5 H15 M1 9.5 H15" stroke="#1E1E1E" stroke-width="1.6"/><path d="M8 1 V5 M8 11 V16" stroke="#1E1E1E" stroke-width="1.3"/><polygon points="5,3.5 11,3.5 8,0" fill="#1E1E1E"/><polygon points="5,13 11,13 8,16.5" fill="#1E1E1E"/></svg>
<svg class="r" style="left:1856px;top:206px" width="15" height="14" viewBox="0 0 15 14"><path d="M7.5 0.8 L14.5 13.2 H0.5 Z" fill="#F6A623" stroke="#F6A623" stroke-linejoin="round" stroke-width="1"/><rect x="6.7" y="4.5" width="1.6" height="5" fill="#1E1E1E"/><rect x="6.7" y="10.5" width="1.6" height="1.6" fill="#1E1E1E"/></svg>
<svg class="r" style="left:1858px;top:230px" width="11" height="6" viewBox="0 0 11 6"><polygon points="0,6 11,6 5.5,0" fill="#868999"/></svg>
<div class="r" style="left:1848px;top:244px;width:5px;height:656px;background:#6BDC6B;"></div>
<div class="r" style="left:1861px;top:335px;width:7px;height:8px;background:#008000;"></div>
<div class="r" style="left:1868px;top:336.5px;width:12px;height:2px;background:#F0A030;"></div>
<div class="r" style="left:1868px;top:342px;width:12px;height:2px;background:#F0A030;"></div>
<div class="r" style="left:1853px;top:649px;width:22px;height:46px;background:#C2C3C9;"></div>
<div class="r" style="left:1868px;top:653px;width:12px;height:2.5px;background:#F0A030;"></div>
<div class="r" style="left:1847px;top:672px;width:33px;height:2.5px;background:#00009C;"></div>
<div class="r" style="left:1867px;top:810.5px;width:13px;height:2.5px;background:#1F9F1F;"></div>
<div class="r" style="left:1867px;top:814.5px;width:13px;height:2.5px;background:#1F9F1F;"></div>
<svg class="r" style="left:1858px;top:937px" width="11" height="6" viewBox="0 0 11 6"><polygon points="0,0 11,0 5.5,6" fill="#868999"/></svg>
<div class="r" style="left:482px;top:952px;width:1399px;height:21px;background:#F5F5F5;"></div>
<div class="r" style="left:482px;top:972px;width:1399px;height:1px;background:#CCCEDB;"></div>
<div class="r" style="left:482px;top:952px;width:75px;height:21px;background:#FFFFFF;box-sizing:border-box;border:1px solid #CCCEDB;"></div>
<div class="t" style="left:485.50px;top:955.30px;font-family:'Liberation Sans', sans-serif;font-size:15px;color:#1E1E1E;letter-spacing:-0.4px;">117 %</div>
<svg class="r" style="left:546px;top:961px" width="7" height="4" viewBox="0 0 7 4"><polygon points="0,0 7,0 3.5,4" fill="#717171"/></svg>
<svg class="r" style="left:590px;top:955px" width="15" height="15" viewBox="0 0 15 15"><circle cx="7.5" cy="7.5" r="7.0" fill="#E51400"/><path d="M4.5 4.5 L10.5 10.5 M10.5 4.5 L4.5 10.5" stroke="#FFFFFF" stroke-width="2.1"/></svg>
<div class="t" style="left:611.50px;top:955.30px;font-family:'Liberation Sans', sans-serif;font-size:15px;color:#1E1E1E;">0</div>
<svg class="r" style="left:647px;top:954px" width="16" height="16" viewBox="0 0 16 16"><path d="M8 1 L15.5 15 H0.5 Z" fill="#F2C200" stroke="#F2C200" stroke-linejoin="round"/><rect x="7.2" y="5" width="1.7" height="6" fill="#1E1E1E"/><rect x="7.2" y="12" width="1.7" height="1.7" fill="#1E1E1E"/></svg>
<div class="t" style="left:668.80px;top:955.30px;font-family:'Liberation Sans', sans-serif;font-size:15px;color:#1E1E1E;">1</div>
<svg class="r" style="left:717px;top:957px" width="13" height="11" viewBox="0 0 13 11"><path d="M12 5.5 H2 M6 1 L1.5 5.5 L6 10" stroke="#00539C" stroke-width="2.2" fill="none"/></svg>
<svg class="r" style="left:752px;top:957px" width="13" height="11" viewBox="0 0 13 11"><path d="M1 5.5 H11 M7 1 L11.5 5.5 L7 10" stroke="#00539C" stroke-width="2.2" fill="none"/></svg>
<div class="r" style="left:785px;top:954px;width:1px;height:17px;background:#CCCEDB;"></div>
<svg class="r" style="left:803px;top:953px" width="17" height="17" viewBox="0 0 17 17"><polygon points="1.5,9.5 8,3.5 13,8.5 7,15.5" fill="#5A5A5A"/><polygon points="4.3,9.6 8,6.3 9.3,7.7 5.7,11.3" fill="#FFFFFF" transform="translate(0.3,1.2)"/><path d="M10.5 5 L14.2 1.6" stroke="#6A6A6A" stroke-width="2" stroke-linecap="round"/></svg>
<svg class="r" style="left:825px;top:960px" width="8" height="5" viewBox="0 0 8 5"><polygon points="0,0 8,0 4.0,5" fill="#1E1E1E"/></svg>
<div class="r" style="left:1912px;top:129px;width:8px;height:124px;background:#CACDD9;"></div>
<div class="t" style="left:1890px;top:129px;font-family:'Liberation Sans', sans-serif;font-size:15px;color:#444444;writing-mode:vertical-rl;white-space:pre;line-height:15px;letter-spacing:-0.18px;">Unit Test Coverage</div>
<div class="r" style="left:1912px;top:267.5px;width:8px;height:67.5px;background:#CACDD9;"></div>
<div class="t" style="left:1890px;top:267.5px;font-family:'Liberation Sans', sans-serif;font-size:15px;color:#444444;writing-mode:vertical-rl;white-space:pre;line-height:15px;letter-spacing:-0.11px;">Properties</div>
<div class="r" style="left:1912px;top:350px;width:8px;height:114px;background:#CACDD9;"></div>
<div class="t" style="left:1890px;top:349px;font-family:'Liberation Sans', sans-serif;font-size:15px;color:#444444;writing-mode:vertical-rl;white-space:pre;line-height:15px;letter-spacing:0.03px;">Solution Explorer</div>
<div class="r" style="left:1912px;top:479px;width:8px;height:95px;background:#CACDD9;"></div>
<div class="t" style="left:1890px;top:480.6px;font-family:'Liberation Sans', sans-serif;font-size:15px;color:#444444;writing-mode:vertical-rl;white-space:pre;line-height:15px;letter-spacing:-0.22px;">Team Explorer</div>
<svg class="r" style="left:5px;top:1022px" width="21" height="14" viewBox="0 0 21 14"><path d="M4.5 1 H20 L16.5 13 H1 Z" fill="none" stroke="#FFFFFF" stroke-width="1.4"/></svg>
<div class="t" style="left:34.50px;top:1021.30px;font-family:'Liberation Sans', sans-serif;font-size:15px;color:#FFFFFF;letter-spacing:-0.565px;">Ready</div>
<div class="t" style="left:801.80px;top:1021.30px;font-family:'Liberation Sans', sans-serif;font-size:15px;color:#FFFFFF;letter-spacing:-0.527px;">Ln 316</div>
<div class="t" style="left:916.00px;top:1021.30px;font-family:'Liberation Sans', sans-serif;font-size:15px;color:#FFFFFF;letter-spacing:-0.243px;">Col 48</div>
<div class="t" style="left:1030.40px;top:1021.30px;font-family:'Liberation Sans', sans-serif;font-size:15px;color:#FFFFFF;letter-spacing:-0.821px;">Ch 48</div>
<div class="t" style="left:1199.50px;top:1021.30px;font-family:'Liberation Sans', sans-serif;font-size:15px;color:#FFFFFF;letter-spacing:-0.9px;">INS</div>
<svg class="r" style="left:1291px;top:1019px" width="14" height="17" viewBox="0 0 14 17"><path d="M7 16 V3 M1.5 8 L7 2 L12.5 8" stroke="#FFFFFF" stroke-width="2.2" fill="none"/></svg>
<div class="t" style="left:1315.70px;top:1021.30px;font-family:'Liberation Sans', sans-serif;font-size:15px;color:#FFFFFF;">0</div>
<svg class="r" style="left:1352px;top:1019px" width="17" height="17" viewBox="0 0 17 17"><path d="M2 15 L3 11 L12 2 L15 5 L6 14 Z" fill="#FFFFFF"/></svg>
<div class="t" style="left:1376.60px;top:1021.30px;font-family:'Liberation Sans', sans-serif;font-size:15px;color:#FFFFFF;">4</div>
<svg class="r" style="left:1411px;top:1018px" width="21" height="20" viewBox="0 0 21 20"><path d="M10.5 1 L20 10 L10.5 19 L1 10 Z" fill="#FFFFFF"/><circle cx="8" cy="7.5" r="1.6" fill="#007ACC"/><circle cx="8" cy="13" r="1.6" fill="#007ACC"/><circle cx="13" cy="10.5" r="1.6" fill="#007ACC"/><path d="M8 7.5 V13 M8 7.5 L13 10.5" stroke="#007ACC" stroke-width="1.2"/></svg>
<div class="t" style="left:1438.30px;top:1021.30px;font-family:'Liberation Sans', sans-serif;font-size:15px;color:#FFFFFF;letter-spacing:-1.096px;">KL01</div>
<svg class="r" style="left:1498px;top:1018px" width="21" height="19" viewBox="0 0 21 19"><path d="M10.5 18 V9 M10.5 9 L3 2 M10.5 9 L18 2" stroke="#FFFFFF" stroke-width="2.2" fill="none"/><circle cx="3" cy="3" r="2.2" fill="#FFFFFF"/><circle cx="18" cy="3" r="2.2" fill="#FFFFFF"/></svg>
<div class="t" style="left:1524.60px;top:1021.30px;font-family:'Liberation Sans', sans-serif;font-size:15px;color:#FFFFFF;letter-spacing:-0.432px;">KL/04B_NUnit_KL/00_Main</div>
<svg class="r" style="left:1706px;top:1025px" width="11" height="6" viewBox="0 0 11 6"><polygon points="0,6 11,6 5.5,0" fill="#FFFFFF"/></svg>
<svg class="r" style="left:1745px;top:1015px" width="32" height="25" viewBox="0 0 32 25"><path d="M5.5 17 C5.5 9 7 4.5 11.5 4.5 C16 4.5 17.5 9 17.5 17 L19 19.5 H4 Z" fill="#E2E8F0"/><circle cx="11.5" cy="21.5" r="2.3" fill="#E2E8F0"/><circle cx="23" cy="18.6" r="7.6" fill="#E51400"/><text x="23" y="23.3" font-family="Liberation Sans" font-size="12" fill="#FFFFFF" text-anchor="middle">4</text></svg>
<svg class="r" style="left:1801px;top:1016px" width="20" height="22" viewBox="0 0 20 22"><path d="M4.5 10 H19 L16 20 H5 L1.5 22 Z" fill="none" stroke="#FFFFFF" stroke-width="1.6" stroke-linejoin="round"/><path d="M9 2.5 L14 1.5 L12.5 14 L9.5 15 Z" fill="#F2A93B"/></svg>
<svg class="r" style="left:1829px;top:1017px" width="21" height="21" viewBox="0 0 21 21"><circle cx="10.5" cy="10.5" r="9" fill="#FFFFFF" stroke="#1E1E1E" stroke-width="1.4"/><path d="M10.5 4.5 V14.5 M6.5 10.5 L10.5 14.5 L14.5 10.5" stroke="#1E1E1E" stroke-width="2.2" fill="none"/></svg>
<svg class="r" style="left:1862px;top:1015px" width="26" height="26" viewBox="0 0 26 26"><circle cx="12.3" cy="11.8" r="10.2" fill="#E8E8E8" stroke="#2A2A2A" stroke-width="1.3"/><circle cx="18.6" cy="20" r="4.8" fill="#FFFFFF"/><circle cx="18.6" cy="20" r="3.6" fill="#FFFFFF" stroke="#1E1E1E" stroke-width="1"/><path d="M18.6 16.4 A3.6 3.6 0 0 1 18.6 23.6 Z" fill="#1E1E1E"/></svg>
<svg class="r" style="left:1894px;top:1015px" width="24" height="24" viewBox="0 0 24 24"><circle cx="12" cy="12" r="11" fill="#FFFFFF"/><circle cx="12" cy="12" r="9.8" fill="#2C9E2C"/><path d="M6 12 L10.5 17 L18 6.5" stroke="#FFFFFF" stroke-width="3" fill="none"/></svg></body></html>
